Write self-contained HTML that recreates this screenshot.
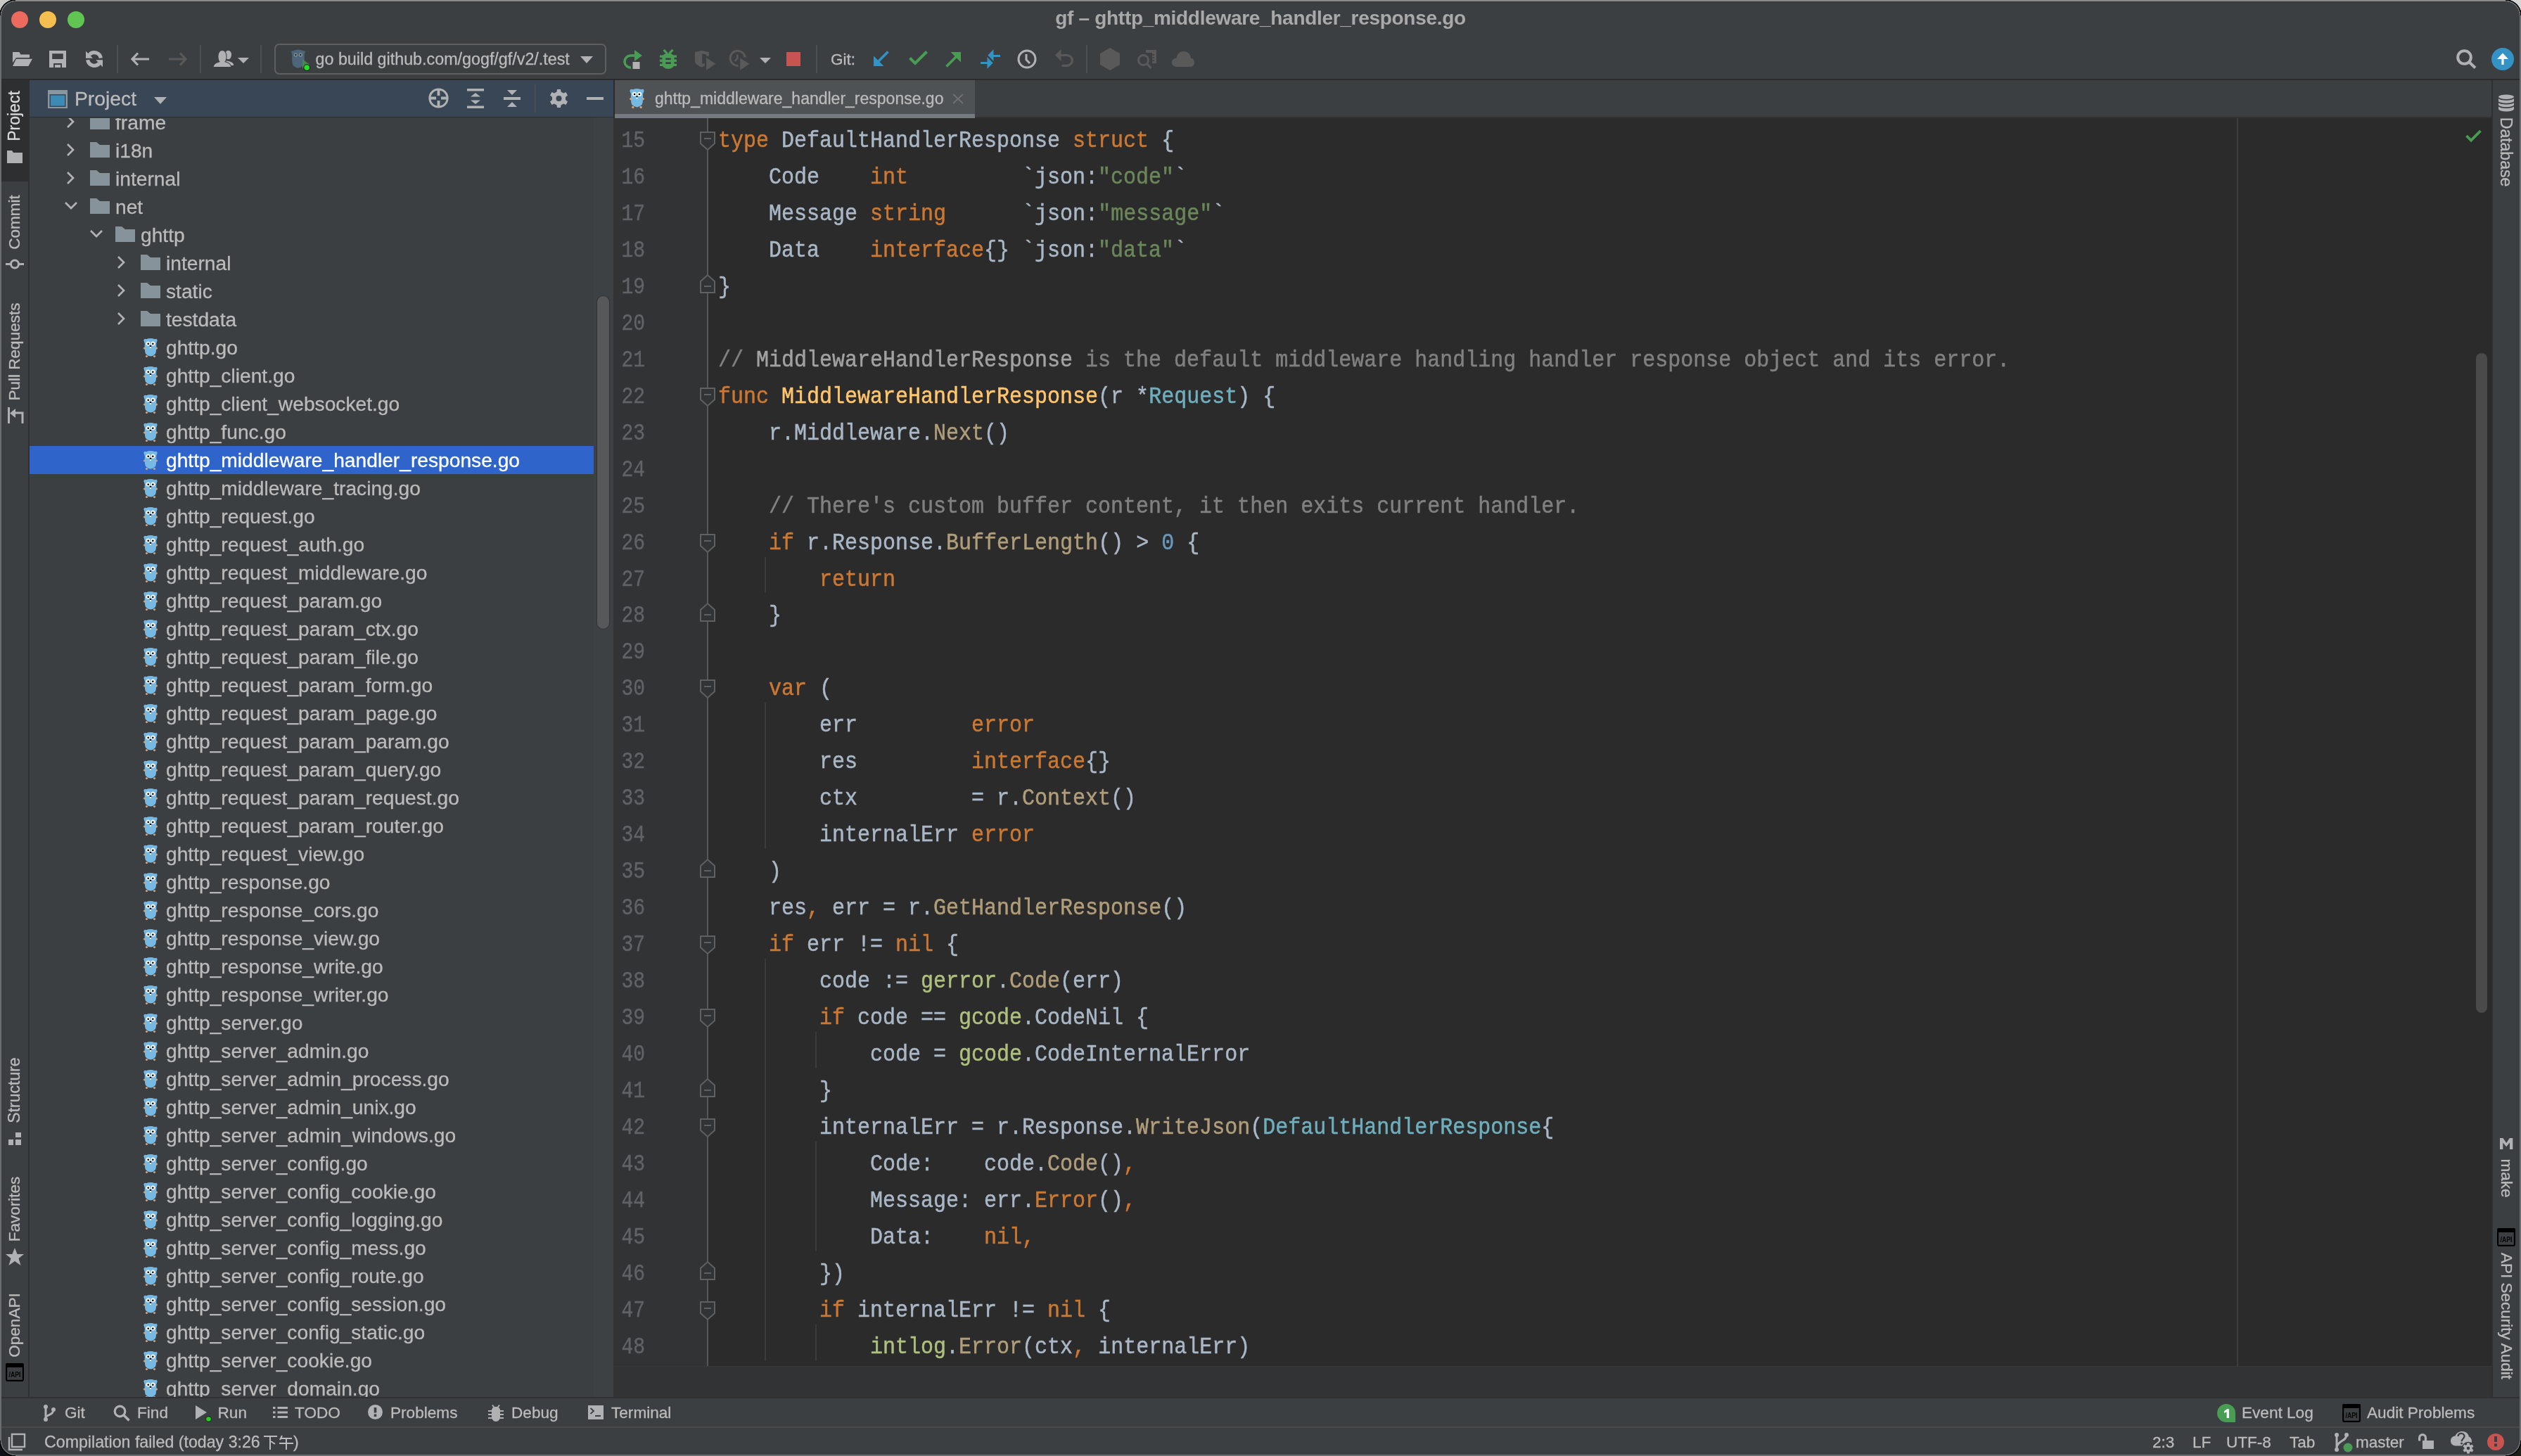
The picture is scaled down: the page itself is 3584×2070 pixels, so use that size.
<!DOCTYPE html>
<html><head><meta charset="utf-8"><title>gf – ghttp_middleware_handler_response.go</title>
<style>
html,body{margin:0;padding:0;width:3584px;height:2070px;overflow:hidden;background:#3C3F41;font-family:'Liberation Sans', sans-serif;}
#win{position:absolute;left:0;top:0;width:3584px;height:2070px;overflow:hidden;will-change:transform;}
.code div{position:absolute;white-space:pre;-webkit-text-stroke:0.45px currentColor;}
.k{color:#CC7832} .s{color:#6A8759} .c{color:#808080} .f{color:#FFC66D} .m{color:#B09D79} .n{color:#6897BB} .y{color:#6FAFBD} .p{color:#AFBF7E} .cr{color:#A2A2A2}
</style></head><body><div id="win">
<div style="position:absolute;left:0px;top:0px;width:3584px;height:2070px;background:#3C3F41;"></div><div style="position:absolute;left:0px;top:112px;width:3584px;height:2px;background:#2B2B2B;"></div><div style="position:absolute;left:0px;top:114px;width:40px;height:1873px;background:#3C3F41;"></div><div style="position:absolute;left:40px;top:114px;width:2px;height:1873px;background:#2F3031;"></div><div style="position:absolute;left:2px;top:114px;width:38px;height:144px;background:#2D2F30;"></div><div style="position:absolute;left:42px;top:114px;width:830px;height:52px;background:#394655;"></div><div style="position:absolute;left:42px;top:166px;width:830px;height:2px;background:#2D2E2E;"></div><div style="position:absolute;left:42px;top:167px;width:830px;height:1820px;background:#3C3F41;"></div><div style="position:absolute;left:844px;top:167px;width:28px;height:1820px;background:#3E4144;"></div><div style="position:absolute;left:872px;top:114px;width:2px;height:54px;background:#2B2B2B;"></div><div style="position:absolute;left:874px;top:114px;width:2668px;height:52px;background:#3C3F41;"></div><div style="position:absolute;left:874px;top:166px;width:2668px;height:2px;background:#323232;"></div><div style="position:absolute;left:872px;top:168px;width:135px;height:1774px;background:#313335;"></div><div style="position:absolute;left:1007px;top:168px;width:2535px;height:1774px;background:#2B2B2B;"></div><div style="position:absolute;left:872px;top:1942px;width:2670px;height:45px;background:#313335;"></div><div style="position:absolute;left:872px;top:1942px;width:2670px;height:1px;background:#38393A;"></div><div style="position:absolute;left:3542px;top:114px;width:2px;height:1873px;background:#2F3031;"></div><div style="position:absolute;left:3544px;top:114px;width:38px;height:1873px;background:#3C3F41;"></div><div style="position:absolute;left:0px;top:1986px;width:3584px;height:2px;background:#303132;"></div><div style="position:absolute;left:0px;top:1988px;width:3584px;height:41px;background:#3C3F41;"></div><div style="position:absolute;left:0px;top:2028px;width:3584px;height:2px;background:#4A4A49;"></div><div style="position:absolute;left:0px;top:2030px;width:3584px;height:40px;background:#3C3F41;"></div><div style="position:absolute;left:1087px;top:792px;width:2px;height:51px;background:#393B3C;"></div><div style="position:absolute;left:1087px;top:999px;width:2px;height:208px;background:#393B3C;"></div><div style="position:absolute;left:1087px;top:1363px;width:2px;height:572px;background:#393B3C;"></div><div style="position:absolute;left:1159px;top:1467px;width:2px;height:52px;background:#393B3C;"></div><div style="position:absolute;left:1159px;top:1623px;width:2px;height:156px;background:#393B3C;"></div><div style="position:absolute;left:1159px;top:1883px;width:2px;height:52px;background:#393B3C;"></div><div style="position:absolute;left:3180px;top:168px;width:2px;height:1774px;background:#3F3F3F;"></div><div style="position:absolute;left:1005px;top:168px;width:2px;height:1774px;background:#555759;"></div><svg style="position:absolute;left:994px;top:187px;overflow:visible" width="24" height="28" viewBox="0 0 24 28"><path d="M2 1 H22 V17 L12 26 L2 17 Z" fill="#313335" stroke="#5E6062" stroke-width="2"/><path d="M7 10 H17" stroke="#5E6062" stroke-width="2"/></svg><svg style="position:absolute;left:994px;top:551px;overflow:visible" width="24" height="28" viewBox="0 0 24 28"><path d="M2 1 H22 V17 L12 26 L2 17 Z" fill="#313335" stroke="#5E6062" stroke-width="2"/><path d="M7 10 H17" stroke="#5E6062" stroke-width="2"/></svg><svg style="position:absolute;left:994px;top:759px;overflow:visible" width="24" height="28" viewBox="0 0 24 28"><path d="M2 1 H22 V17 L12 26 L2 17 Z" fill="#313335" stroke="#5E6062" stroke-width="2"/><path d="M7 10 H17" stroke="#5E6062" stroke-width="2"/></svg><svg style="position:absolute;left:994px;top:966px;overflow:visible" width="24" height="28" viewBox="0 0 24 28"><path d="M2 1 H22 V17 L12 26 L2 17 Z" fill="#313335" stroke="#5E6062" stroke-width="2"/><path d="M7 10 H17" stroke="#5E6062" stroke-width="2"/></svg><svg style="position:absolute;left:994px;top:1330px;overflow:visible" width="24" height="28" viewBox="0 0 24 28"><path d="M2 1 H22 V17 L12 26 L2 17 Z" fill="#313335" stroke="#5E6062" stroke-width="2"/><path d="M7 10 H17" stroke="#5E6062" stroke-width="2"/></svg><svg style="position:absolute;left:994px;top:1434px;overflow:visible" width="24" height="28" viewBox="0 0 24 28"><path d="M2 1 H22 V17 L12 26 L2 17 Z" fill="#313335" stroke="#5E6062" stroke-width="2"/><path d="M7 10 H17" stroke="#5E6062" stroke-width="2"/></svg><svg style="position:absolute;left:994px;top:1590px;overflow:visible" width="24" height="28" viewBox="0 0 24 28"><path d="M2 1 H22 V17 L12 26 L2 17 Z" fill="#313335" stroke="#5E6062" stroke-width="2"/><path d="M7 10 H17" stroke="#5E6062" stroke-width="2"/></svg><svg style="position:absolute;left:994px;top:1850px;overflow:visible" width="24" height="28" viewBox="0 0 24 28"><path d="M2 1 H22 V17 L12 26 L2 17 Z" fill="#313335" stroke="#5E6062" stroke-width="2"/><path d="M7 10 H17" stroke="#5E6062" stroke-width="2"/></svg><svg style="position:absolute;left:994px;top:389px;overflow:visible" width="24" height="28" viewBox="0 0 24 28"><path d="M2 27 H22 V11 L12 2 L2 11 Z" fill="#313335" stroke="#5E6062" stroke-width="2"/><path d="M7 18 H17" stroke="#5E6062" stroke-width="2"/></svg><svg style="position:absolute;left:994px;top:856px;overflow:visible" width="24" height="28" viewBox="0 0 24 28"><path d="M2 27 H22 V11 L12 2 L2 11 Z" fill="#313335" stroke="#5E6062" stroke-width="2"/><path d="M7 18 H17" stroke="#5E6062" stroke-width="2"/></svg><svg style="position:absolute;left:994px;top:1220px;overflow:visible" width="24" height="28" viewBox="0 0 24 28"><path d="M2 27 H22 V11 L12 2 L2 11 Z" fill="#313335" stroke="#5E6062" stroke-width="2"/><path d="M7 18 H17" stroke="#5E6062" stroke-width="2"/></svg><svg style="position:absolute;left:994px;top:1532px;overflow:visible" width="24" height="28" viewBox="0 0 24 28"><path d="M2 27 H22 V11 L12 2 L2 11 Z" fill="#313335" stroke="#5E6062" stroke-width="2"/><path d="M7 18 H17" stroke="#5E6062" stroke-width="2"/></svg><svg style="position:absolute;left:994px;top:1792px;overflow:visible" width="24" height="28" viewBox="0 0 24 28"><path d="M2 27 H22 V11 L12 2 L2 11 Z" fill="#313335" stroke="#5E6062" stroke-width="2"/><path d="M7 18 H17" stroke="#5E6062" stroke-width="2"/></svg><div style="position:absolute;left:850px;width:67px;text-align:right;top:176px;font-family:'Liberation Mono', monospace;font-size:28px;line-height:52px;color:#606366;white-space:pre;-webkit-text-stroke:0.35px #606366;transform:scaleY(1.17);transform-origin:0 33.5px">15</div><div style="position:absolute;left:850px;width:67px;text-align:right;top:228px;font-family:'Liberation Mono', monospace;font-size:28px;line-height:52px;color:#606366;white-space:pre;-webkit-text-stroke:0.35px #606366;transform:scaleY(1.17);transform-origin:0 33.5px">16</div><div style="position:absolute;left:850px;width:67px;text-align:right;top:280px;font-family:'Liberation Mono', monospace;font-size:28px;line-height:52px;color:#606366;white-space:pre;-webkit-text-stroke:0.35px #606366;transform:scaleY(1.17);transform-origin:0 33.5px">17</div><div style="position:absolute;left:850px;width:67px;text-align:right;top:332px;font-family:'Liberation Mono', monospace;font-size:28px;line-height:52px;color:#606366;white-space:pre;-webkit-text-stroke:0.35px #606366;transform:scaleY(1.17);transform-origin:0 33.5px">18</div><div style="position:absolute;left:850px;width:67px;text-align:right;top:384px;font-family:'Liberation Mono', monospace;font-size:28px;line-height:52px;color:#606366;white-space:pre;-webkit-text-stroke:0.35px #606366;transform:scaleY(1.17);transform-origin:0 33.5px">19</div><div style="position:absolute;left:850px;width:67px;text-align:right;top:436px;font-family:'Liberation Mono', monospace;font-size:28px;line-height:52px;color:#606366;white-space:pre;-webkit-text-stroke:0.35px #606366;transform:scaleY(1.17);transform-origin:0 33.5px">20</div><div style="position:absolute;left:850px;width:67px;text-align:right;top:488px;font-family:'Liberation Mono', monospace;font-size:28px;line-height:52px;color:#606366;white-space:pre;-webkit-text-stroke:0.35px #606366;transform:scaleY(1.17);transform-origin:0 33.5px">21</div><div style="position:absolute;left:850px;width:67px;text-align:right;top:540px;font-family:'Liberation Mono', monospace;font-size:28px;line-height:52px;color:#606366;white-space:pre;-webkit-text-stroke:0.35px #606366;transform:scaleY(1.17);transform-origin:0 33.5px">22</div><div style="position:absolute;left:850px;width:67px;text-align:right;top:592px;font-family:'Liberation Mono', monospace;font-size:28px;line-height:52px;color:#606366;white-space:pre;-webkit-text-stroke:0.35px #606366;transform:scaleY(1.17);transform-origin:0 33.5px">23</div><div style="position:absolute;left:850px;width:67px;text-align:right;top:644px;font-family:'Liberation Mono', monospace;font-size:28px;line-height:52px;color:#606366;white-space:pre;-webkit-text-stroke:0.35px #606366;transform:scaleY(1.17);transform-origin:0 33.5px">24</div><div style="position:absolute;left:850px;width:67px;text-align:right;top:696px;font-family:'Liberation Mono', monospace;font-size:28px;line-height:52px;color:#606366;white-space:pre;-webkit-text-stroke:0.35px #606366;transform:scaleY(1.17);transform-origin:0 33.5px">25</div><div style="position:absolute;left:850px;width:67px;text-align:right;top:748px;font-family:'Liberation Mono', monospace;font-size:28px;line-height:52px;color:#606366;white-space:pre;-webkit-text-stroke:0.35px #606366;transform:scaleY(1.17);transform-origin:0 33.5px">26</div><div style="position:absolute;left:850px;width:67px;text-align:right;top:800px;font-family:'Liberation Mono', monospace;font-size:28px;line-height:52px;color:#606366;white-space:pre;-webkit-text-stroke:0.35px #606366;transform:scaleY(1.17);transform-origin:0 33.5px">27</div><div style="position:absolute;left:850px;width:67px;text-align:right;top:851px;font-family:'Liberation Mono', monospace;font-size:28px;line-height:52px;color:#606366;white-space:pre;-webkit-text-stroke:0.35px #606366;transform:scaleY(1.17);transform-origin:0 33.5px">28</div><div style="position:absolute;left:850px;width:67px;text-align:right;top:903px;font-family:'Liberation Mono', monospace;font-size:28px;line-height:52px;color:#606366;white-space:pre;-webkit-text-stroke:0.35px #606366;transform:scaleY(1.17);transform-origin:0 33.5px">29</div><div style="position:absolute;left:850px;width:67px;text-align:right;top:955px;font-family:'Liberation Mono', monospace;font-size:28px;line-height:52px;color:#606366;white-space:pre;-webkit-text-stroke:0.35px #606366;transform:scaleY(1.17);transform-origin:0 33.5px">30</div><div style="position:absolute;left:850px;width:67px;text-align:right;top:1007px;font-family:'Liberation Mono', monospace;font-size:28px;line-height:52px;color:#606366;white-space:pre;-webkit-text-stroke:0.35px #606366;transform:scaleY(1.17);transform-origin:0 33.5px">31</div><div style="position:absolute;left:850px;width:67px;text-align:right;top:1059px;font-family:'Liberation Mono', monospace;font-size:28px;line-height:52px;color:#606366;white-space:pre;-webkit-text-stroke:0.35px #606366;transform:scaleY(1.17);transform-origin:0 33.5px">32</div><div style="position:absolute;left:850px;width:67px;text-align:right;top:1111px;font-family:'Liberation Mono', monospace;font-size:28px;line-height:52px;color:#606366;white-space:pre;-webkit-text-stroke:0.35px #606366;transform:scaleY(1.17);transform-origin:0 33.5px">33</div><div style="position:absolute;left:850px;width:67px;text-align:right;top:1163px;font-family:'Liberation Mono', monospace;font-size:28px;line-height:52px;color:#606366;white-space:pre;-webkit-text-stroke:0.35px #606366;transform:scaleY(1.17);transform-origin:0 33.5px">34</div><div style="position:absolute;left:850px;width:67px;text-align:right;top:1215px;font-family:'Liberation Mono', monospace;font-size:28px;line-height:52px;color:#606366;white-space:pre;-webkit-text-stroke:0.35px #606366;transform:scaleY(1.17);transform-origin:0 33.5px">35</div><div style="position:absolute;left:850px;width:67px;text-align:right;top:1267px;font-family:'Liberation Mono', monospace;font-size:28px;line-height:52px;color:#606366;white-space:pre;-webkit-text-stroke:0.35px #606366;transform:scaleY(1.17);transform-origin:0 33.5px">36</div><div style="position:absolute;left:850px;width:67px;text-align:right;top:1319px;font-family:'Liberation Mono', monospace;font-size:28px;line-height:52px;color:#606366;white-space:pre;-webkit-text-stroke:0.35px #606366;transform:scaleY(1.17);transform-origin:0 33.5px">37</div><div style="position:absolute;left:850px;width:67px;text-align:right;top:1371px;font-family:'Liberation Mono', monospace;font-size:28px;line-height:52px;color:#606366;white-space:pre;-webkit-text-stroke:0.35px #606366;transform:scaleY(1.17);transform-origin:0 33.5px">38</div><div style="position:absolute;left:850px;width:67px;text-align:right;top:1423px;font-family:'Liberation Mono', monospace;font-size:28px;line-height:52px;color:#606366;white-space:pre;-webkit-text-stroke:0.35px #606366;transform:scaleY(1.17);transform-origin:0 33.5px">39</div><div style="position:absolute;left:850px;width:67px;text-align:right;top:1475px;font-family:'Liberation Mono', monospace;font-size:28px;line-height:52px;color:#606366;white-space:pre;-webkit-text-stroke:0.35px #606366;transform:scaleY(1.17);transform-origin:0 33.5px">40</div><div style="position:absolute;left:850px;width:67px;text-align:right;top:1527px;font-family:'Liberation Mono', monospace;font-size:28px;line-height:52px;color:#606366;white-space:pre;-webkit-text-stroke:0.35px #606366;transform:scaleY(1.17);transform-origin:0 33.5px">41</div><div style="position:absolute;left:850px;width:67px;text-align:right;top:1579px;font-family:'Liberation Mono', monospace;font-size:28px;line-height:52px;color:#606366;white-space:pre;-webkit-text-stroke:0.35px #606366;transform:scaleY(1.17);transform-origin:0 33.5px">42</div><div style="position:absolute;left:850px;width:67px;text-align:right;top:1631px;font-family:'Liberation Mono', monospace;font-size:28px;line-height:52px;color:#606366;white-space:pre;-webkit-text-stroke:0.35px #606366;transform:scaleY(1.17);transform-origin:0 33.5px">43</div><div style="position:absolute;left:850px;width:67px;text-align:right;top:1683px;font-family:'Liberation Mono', monospace;font-size:28px;line-height:52px;color:#606366;white-space:pre;-webkit-text-stroke:0.35px #606366;transform:scaleY(1.17);transform-origin:0 33.5px">44</div><div style="position:absolute;left:850px;width:67px;text-align:right;top:1735px;font-family:'Liberation Mono', monospace;font-size:28px;line-height:52px;color:#606366;white-space:pre;-webkit-text-stroke:0.35px #606366;transform:scaleY(1.17);transform-origin:0 33.5px">45</div><div style="position:absolute;left:850px;width:67px;text-align:right;top:1787px;font-family:'Liberation Mono', monospace;font-size:28px;line-height:52px;color:#606366;white-space:pre;-webkit-text-stroke:0.35px #606366;transform:scaleY(1.17);transform-origin:0 33.5px">46</div><div style="position:absolute;left:850px;width:67px;text-align:right;top:1839px;font-family:'Liberation Mono', monospace;font-size:28px;line-height:52px;color:#606366;white-space:pre;-webkit-text-stroke:0.35px #606366;transform:scaleY(1.17);transform-origin:0 33.5px">47</div><div style="position:absolute;left:850px;width:67px;text-align:right;top:1891px;font-family:'Liberation Mono', monospace;font-size:28px;line-height:52px;color:#606366;white-space:pre;-webkit-text-stroke:0.35px #606366;transform:scaleY(1.17);transform-origin:0 33.5px">48</div><div class="code" style="position:absolute;left:0;top:0;font-family:'Liberation Mono', monospace;font-size:30px;line-height:52px;color:#A9B7C6"><div style="left:1021px;top:175px;transform:scaleY(1.09);transform-origin:0 34px"><span class="k">type</span> DefaultHandlerResponse <span class="k">struct</span> {</div><div style="left:1021px;top:227px;transform:scaleY(1.09);transform-origin:0 34px">    Code    <span class="k">int</span>         `json:<span class="s">&quot;code&quot;</span>`</div><div style="left:1021px;top:279px;transform:scaleY(1.09);transform-origin:0 34px">    Message <span class="k">string</span>      `json:<span class="s">&quot;message&quot;</span>`</div><div style="left:1021px;top:331px;transform:scaleY(1.09);transform-origin:0 34px">    Data    <span class="k">interface</span>{} `json:<span class="s">&quot;data&quot;</span>`</div><div style="left:1021px;top:383px;transform:scaleY(1.09);transform-origin:0 34px">}</div><div style="left:1021px;top:435px;transform:scaleY(1.09);transform-origin:0 34px"></div><div style="left:1021px;top:487px;transform:scaleY(1.09);transform-origin:0 34px"><span class="c">// </span><span class="cr">MiddlewareHandlerResponse</span><span class="c"> is the default middleware handling handler response object and its error.</span></div><div style="left:1021px;top:539px;transform:scaleY(1.09);transform-origin:0 34px"><span class="k">func</span> <span class="f">MiddlewareHandlerResponse</span>(r *<span class="y">Request</span>) {</div><div style="left:1021px;top:591px;transform:scaleY(1.09);transform-origin:0 34px">    r.Middleware.<span class="m">Next</span>()</div><div style="left:1021px;top:643px;transform:scaleY(1.09);transform-origin:0 34px"></div><div style="left:1021px;top:695px;transform:scaleY(1.09);transform-origin:0 34px">    <span class="c">// There&#x27;s custom buffer content, it then exits current handler.</span></div><div style="left:1021px;top:747px;transform:scaleY(1.09);transform-origin:0 34px">    <span class="k">if</span> r.Response.<span class="m">BufferLength</span>() &gt; <span class="n">0</span> {</div><div style="left:1021px;top:799px;transform:scaleY(1.09);transform-origin:0 34px">        <span class="k">return</span></div><div style="left:1021px;top:850px;transform:scaleY(1.09);transform-origin:0 34px">    }</div><div style="left:1021px;top:902px;transform:scaleY(1.09);transform-origin:0 34px"></div><div style="left:1021px;top:954px;transform:scaleY(1.09);transform-origin:0 34px">    <span class="k">var</span> (</div><div style="left:1021px;top:1006px;transform:scaleY(1.09);transform-origin:0 34px">        err         <span class="k">error</span></div><div style="left:1021px;top:1058px;transform:scaleY(1.09);transform-origin:0 34px">        res         <span class="k">interface</span>{}</div><div style="left:1021px;top:1110px;transform:scaleY(1.09);transform-origin:0 34px">        ctx         = r.<span class="m">Context</span>()</div><div style="left:1021px;top:1162px;transform:scaleY(1.09);transform-origin:0 34px">        internalErr <span class="k">error</span></div><div style="left:1021px;top:1214px;transform:scaleY(1.09);transform-origin:0 34px">    )</div><div style="left:1021px;top:1266px;transform:scaleY(1.09);transform-origin:0 34px">    res<span class="k">,</span> err = r.<span class="m">GetHandlerResponse</span>()</div><div style="left:1021px;top:1318px;transform:scaleY(1.09);transform-origin:0 34px">    <span class="k">if</span> err != <span class="k">nil</span> {</div><div style="left:1021px;top:1370px;transform:scaleY(1.09);transform-origin:0 34px">        code := <span class="p">gerror</span>.<span class="m">Code</span>(err)</div><div style="left:1021px;top:1422px;transform:scaleY(1.09);transform-origin:0 34px">        <span class="k">if</span> code == <span class="p">gcode</span>.CodeNil {</div><div style="left:1021px;top:1474px;transform:scaleY(1.09);transform-origin:0 34px">            code = <span class="p">gcode</span>.CodeInternalError</div><div style="left:1021px;top:1526px;transform:scaleY(1.09);transform-origin:0 34px">        }</div><div style="left:1021px;top:1578px;transform:scaleY(1.09);transform-origin:0 34px">        internalErr = r.Response.<span class="m">WriteJson</span>(<span class="y">DefaultHandlerResponse</span>{</div><div style="left:1021px;top:1630px;transform:scaleY(1.09);transform-origin:0 34px">            Code:    code.<span class="m">Code</span>()<span class="k">,</span></div><div style="left:1021px;top:1682px;transform:scaleY(1.09);transform-origin:0 34px">            Message: err.<span class="k">Error</span>()<span class="k">,</span></div><div style="left:1021px;top:1734px;transform:scaleY(1.09);transform-origin:0 34px">            Data:    <span class="k">nil</span><span class="k">,</span></div><div style="left:1021px;top:1786px;transform:scaleY(1.09);transform-origin:0 34px">        })</div><div style="left:1021px;top:1838px;transform:scaleY(1.09);transform-origin:0 34px">        <span class="k">if</span> internalErr != <span class="k">nil</span> {</div><div style="left:1021px;top:1890px;transform:scaleY(1.09);transform-origin:0 34px">            <span class="p">intlog</span>.<span class="m">Error</span>(ctx<span class="k">,</span> internalErr)</div></div><div style="position:absolute;left:0;top:0;width:3584px;height:2070px;clip-path:inset(168px 2740px 84px 42px)"><svg style="position:absolute;left:128px;top:162px;overflow:visible" width="28" height="22" viewBox="0 0 28 22"><path d="M0 0 H9 L14 4 H28 V22 H0 Z" fill="#87939A"/></svg><svg style="position:absolute;left:95px;top:164px;overflow:visible" width="10" height="18" viewBox="0 0 10 18"><path d="M1 1 L9 9 L1 17" fill="none" stroke="#AFB1B3" stroke-width="2.7"/></svg><div style="position:absolute;left:164px;top:157.23px;font-size:28.2px;line-height:34px;color:#BBBBBB;font-weight:normal;white-space:nowrap;-webkit-text-stroke:0.3px #BBBBBB;">frame</div><svg style="position:absolute;left:128px;top:202px;overflow:visible" width="28" height="22" viewBox="0 0 28 22"><path d="M0 0 H9 L14 4 H28 V22 H0 Z" fill="#87939A"/></svg><svg style="position:absolute;left:95px;top:204px;overflow:visible" width="10" height="18" viewBox="0 0 10 18"><path d="M1 1 L9 9 L1 17" fill="none" stroke="#AFB1B3" stroke-width="2.7"/></svg><div style="position:absolute;left:164px;top:197.23px;font-size:28.2px;line-height:34px;color:#BBBBBB;font-weight:normal;white-space:nowrap;-webkit-text-stroke:0.3px #BBBBBB;">i18n</div><svg style="position:absolute;left:128px;top:242px;overflow:visible" width="28" height="22" viewBox="0 0 28 22"><path d="M0 0 H9 L14 4 H28 V22 H0 Z" fill="#87939A"/></svg><svg style="position:absolute;left:95px;top:244px;overflow:visible" width="10" height="18" viewBox="0 0 10 18"><path d="M1 1 L9 9 L1 17" fill="none" stroke="#AFB1B3" stroke-width="2.7"/></svg><div style="position:absolute;left:164px;top:237.23px;font-size:28.2px;line-height:34px;color:#BBBBBB;font-weight:normal;white-space:nowrap;-webkit-text-stroke:0.3px #BBBBBB;">internal</div><svg style="position:absolute;left:128px;top:282px;overflow:visible" width="28" height="22" viewBox="0 0 28 22"><path d="M0 0 H9 L14 4 H28 V22 H0 Z" fill="#87939A"/></svg><svg style="position:absolute;left:92px;top:287px;overflow:visible" width="18" height="10" viewBox="0 0 18 10"><path d="M1 1 L9 9 L17 1" fill="none" stroke="#AFB1B3" stroke-width="2.7"/></svg><div style="position:absolute;left:164px;top:277.23px;font-size:28.2px;line-height:34px;color:#BBBBBB;font-weight:normal;white-space:nowrap;-webkit-text-stroke:0.3px #BBBBBB;">net</div><svg style="position:absolute;left:164px;top:322px;overflow:visible" width="28" height="22" viewBox="0 0 28 22"><path d="M0 0 H9 L14 4 H28 V22 H0 Z" fill="#87939A"/></svg><svg style="position:absolute;left:128px;top:327px;overflow:visible" width="18" height="10" viewBox="0 0 18 10"><path d="M1 1 L9 9 L17 1" fill="none" stroke="#AFB1B3" stroke-width="2.7"/></svg><div style="position:absolute;left:200px;top:317.23px;font-size:28.2px;line-height:34px;color:#BBBBBB;font-weight:normal;white-space:nowrap;-webkit-text-stroke:0.3px #BBBBBB;">ghttp</div><svg style="position:absolute;left:200px;top:362px;overflow:visible" width="28" height="22" viewBox="0 0 28 22"><path d="M0 0 H9 L14 4 H28 V22 H0 Z" fill="#87939A"/></svg><svg style="position:absolute;left:167px;top:364px;overflow:visible" width="10" height="18" viewBox="0 0 10 18"><path d="M1 1 L9 9 L1 17" fill="none" stroke="#AFB1B3" stroke-width="2.7"/></svg><div style="position:absolute;left:236px;top:357.23px;font-size:28.2px;line-height:34px;color:#BBBBBB;font-weight:normal;white-space:nowrap;-webkit-text-stroke:0.3px #BBBBBB;">internal</div><svg style="position:absolute;left:200px;top:402px;overflow:visible" width="28" height="22" viewBox="0 0 28 22"><path d="M0 0 H9 L14 4 H28 V22 H0 Z" fill="#87939A"/></svg><svg style="position:absolute;left:167px;top:404px;overflow:visible" width="10" height="18" viewBox="0 0 10 18"><path d="M1 1 L9 9 L1 17" fill="none" stroke="#AFB1B3" stroke-width="2.7"/></svg><div style="position:absolute;left:236px;top:397.23px;font-size:28.2px;line-height:34px;color:#BBBBBB;font-weight:normal;white-space:nowrap;-webkit-text-stroke:0.3px #BBBBBB;">static</div><svg style="position:absolute;left:200px;top:442px;overflow:visible" width="28" height="22" viewBox="0 0 28 22"><path d="M0 0 H9 L14 4 H28 V22 H0 Z" fill="#87939A"/></svg><svg style="position:absolute;left:167px;top:444px;overflow:visible" width="10" height="18" viewBox="0 0 10 18"><path d="M1 1 L9 9 L1 17" fill="none" stroke="#AFB1B3" stroke-width="2.7"/></svg><div style="position:absolute;left:236px;top:437.23px;font-size:28.2px;line-height:34px;color:#BBBBBB;font-weight:normal;white-space:nowrap;-webkit-text-stroke:0.3px #BBBBBB;">testdata</div><svg style="position:absolute;left:204px;top:480px;overflow:visible" width="20" height="28" viewBox="0 0 20 28"><ellipse cx="10" cy="6" rx="9" ry="5" fill="#76B9E3"/><circle cx="2.5" cy="4" r="2.2" fill="#76B9E3"/><circle cx="17.5" cy="4" r="2.2" fill="#76B9E3"/><path d="M2 6 Q1 18 3 23 Q10 30 17 23 Q19 18 18 6 Z" fill="#76B9E3"/><circle cx="1.5" cy="15" r="1.6" fill="#D3A27F"/><circle cx="18.5" cy="15" r="1.6" fill="#D3A27F"/><circle cx="4.5" cy="26.5" r="1.6" fill="#D3A27F"/><circle cx="15.5" cy="26.5" r="1.6" fill="#D3A27F"/><circle cx="6.5" cy="8.5" r="3" fill="#fff"/><circle cx="13.5" cy="8.5" r="3" fill="#fff"/><circle cx="6.7" cy="8.7" r="1.3" fill="#000"/><circle cx="13.3" cy="8.7" r="1.3" fill="#000"/><ellipse cx="10" cy="12" rx="1.4" ry="1" fill="#000"/><rect x="9" y="13" width="2" height="2" fill="#fff"/></svg><div style="position:absolute;left:236px;top:477.23px;font-size:28.2px;line-height:34px;color:#BBBBBB;font-weight:normal;white-space:nowrap;-webkit-text-stroke:0.3px #BBBBBB;">ghttp.go</div><svg style="position:absolute;left:204px;top:520px;overflow:visible" width="20" height="28" viewBox="0 0 20 28"><ellipse cx="10" cy="6" rx="9" ry="5" fill="#76B9E3"/><circle cx="2.5" cy="4" r="2.2" fill="#76B9E3"/><circle cx="17.5" cy="4" r="2.2" fill="#76B9E3"/><path d="M2 6 Q1 18 3 23 Q10 30 17 23 Q19 18 18 6 Z" fill="#76B9E3"/><circle cx="1.5" cy="15" r="1.6" fill="#D3A27F"/><circle cx="18.5" cy="15" r="1.6" fill="#D3A27F"/><circle cx="4.5" cy="26.5" r="1.6" fill="#D3A27F"/><circle cx="15.5" cy="26.5" r="1.6" fill="#D3A27F"/><circle cx="6.5" cy="8.5" r="3" fill="#fff"/><circle cx="13.5" cy="8.5" r="3" fill="#fff"/><circle cx="6.7" cy="8.7" r="1.3" fill="#000"/><circle cx="13.3" cy="8.7" r="1.3" fill="#000"/><ellipse cx="10" cy="12" rx="1.4" ry="1" fill="#000"/><rect x="9" y="13" width="2" height="2" fill="#fff"/></svg><div style="position:absolute;left:236px;top:517.23px;font-size:28.2px;line-height:34px;color:#BBBBBB;font-weight:normal;white-space:nowrap;-webkit-text-stroke:0.3px #BBBBBB;">ghttp_client.go</div><svg style="position:absolute;left:204px;top:560px;overflow:visible" width="20" height="28" viewBox="0 0 20 28"><ellipse cx="10" cy="6" rx="9" ry="5" fill="#76B9E3"/><circle cx="2.5" cy="4" r="2.2" fill="#76B9E3"/><circle cx="17.5" cy="4" r="2.2" fill="#76B9E3"/><path d="M2 6 Q1 18 3 23 Q10 30 17 23 Q19 18 18 6 Z" fill="#76B9E3"/><circle cx="1.5" cy="15" r="1.6" fill="#D3A27F"/><circle cx="18.5" cy="15" r="1.6" fill="#D3A27F"/><circle cx="4.5" cy="26.5" r="1.6" fill="#D3A27F"/><circle cx="15.5" cy="26.5" r="1.6" fill="#D3A27F"/><circle cx="6.5" cy="8.5" r="3" fill="#fff"/><circle cx="13.5" cy="8.5" r="3" fill="#fff"/><circle cx="6.7" cy="8.7" r="1.3" fill="#000"/><circle cx="13.3" cy="8.7" r="1.3" fill="#000"/><ellipse cx="10" cy="12" rx="1.4" ry="1" fill="#000"/><rect x="9" y="13" width="2" height="2" fill="#fff"/></svg><div style="position:absolute;left:236px;top:557.23px;font-size:28.2px;line-height:34px;color:#BBBBBB;font-weight:normal;white-space:nowrap;-webkit-text-stroke:0.3px #BBBBBB;">ghttp_client_websocket.go</div><svg style="position:absolute;left:204px;top:600px;overflow:visible" width="20" height="28" viewBox="0 0 20 28"><ellipse cx="10" cy="6" rx="9" ry="5" fill="#76B9E3"/><circle cx="2.5" cy="4" r="2.2" fill="#76B9E3"/><circle cx="17.5" cy="4" r="2.2" fill="#76B9E3"/><path d="M2 6 Q1 18 3 23 Q10 30 17 23 Q19 18 18 6 Z" fill="#76B9E3"/><circle cx="1.5" cy="15" r="1.6" fill="#D3A27F"/><circle cx="18.5" cy="15" r="1.6" fill="#D3A27F"/><circle cx="4.5" cy="26.5" r="1.6" fill="#D3A27F"/><circle cx="15.5" cy="26.5" r="1.6" fill="#D3A27F"/><circle cx="6.5" cy="8.5" r="3" fill="#fff"/><circle cx="13.5" cy="8.5" r="3" fill="#fff"/><circle cx="6.7" cy="8.7" r="1.3" fill="#000"/><circle cx="13.3" cy="8.7" r="1.3" fill="#000"/><ellipse cx="10" cy="12" rx="1.4" ry="1" fill="#000"/><rect x="9" y="13" width="2" height="2" fill="#fff"/></svg><div style="position:absolute;left:236px;top:597.23px;font-size:28.2px;line-height:34px;color:#BBBBBB;font-weight:normal;white-space:nowrap;-webkit-text-stroke:0.3px #BBBBBB;">ghttp_func.go</div><div style="position:absolute;left:42px;top:634px;width:802px;height:40px;background:#2F65CA;"></div><svg style="position:absolute;left:204px;top:640px;overflow:visible" width="20" height="28" viewBox="0 0 20 28"><ellipse cx="10" cy="6" rx="9" ry="5" fill="#76B9E3"/><circle cx="2.5" cy="4" r="2.2" fill="#76B9E3"/><circle cx="17.5" cy="4" r="2.2" fill="#76B9E3"/><path d="M2 6 Q1 18 3 23 Q10 30 17 23 Q19 18 18 6 Z" fill="#76B9E3"/><circle cx="1.5" cy="15" r="1.6" fill="#D3A27F"/><circle cx="18.5" cy="15" r="1.6" fill="#D3A27F"/><circle cx="4.5" cy="26.5" r="1.6" fill="#D3A27F"/><circle cx="15.5" cy="26.5" r="1.6" fill="#D3A27F"/><circle cx="6.5" cy="8.5" r="3" fill="#fff"/><circle cx="13.5" cy="8.5" r="3" fill="#fff"/><circle cx="6.7" cy="8.7" r="1.3" fill="#000"/><circle cx="13.3" cy="8.7" r="1.3" fill="#000"/><ellipse cx="10" cy="12" rx="1.4" ry="1" fill="#000"/><rect x="9" y="13" width="2" height="2" fill="#fff"/></svg><div style="position:absolute;left:236px;top:637.23px;font-size:28.2px;line-height:34px;color:#FFFFFF;font-weight:normal;white-space:nowrap;-webkit-text-stroke:0.3px #FFFFFF;">ghttp_middleware_handler_response.go</div><svg style="position:absolute;left:204px;top:680px;overflow:visible" width="20" height="28" viewBox="0 0 20 28"><ellipse cx="10" cy="6" rx="9" ry="5" fill="#76B9E3"/><circle cx="2.5" cy="4" r="2.2" fill="#76B9E3"/><circle cx="17.5" cy="4" r="2.2" fill="#76B9E3"/><path d="M2 6 Q1 18 3 23 Q10 30 17 23 Q19 18 18 6 Z" fill="#76B9E3"/><circle cx="1.5" cy="15" r="1.6" fill="#D3A27F"/><circle cx="18.5" cy="15" r="1.6" fill="#D3A27F"/><circle cx="4.5" cy="26.5" r="1.6" fill="#D3A27F"/><circle cx="15.5" cy="26.5" r="1.6" fill="#D3A27F"/><circle cx="6.5" cy="8.5" r="3" fill="#fff"/><circle cx="13.5" cy="8.5" r="3" fill="#fff"/><circle cx="6.7" cy="8.7" r="1.3" fill="#000"/><circle cx="13.3" cy="8.7" r="1.3" fill="#000"/><ellipse cx="10" cy="12" rx="1.4" ry="1" fill="#000"/><rect x="9" y="13" width="2" height="2" fill="#fff"/></svg><div style="position:absolute;left:236px;top:677.23px;font-size:28.2px;line-height:34px;color:#BBBBBB;font-weight:normal;white-space:nowrap;-webkit-text-stroke:0.3px #BBBBBB;">ghttp_middleware_tracing.go</div><svg style="position:absolute;left:204px;top:720px;overflow:visible" width="20" height="28" viewBox="0 0 20 28"><ellipse cx="10" cy="6" rx="9" ry="5" fill="#76B9E3"/><circle cx="2.5" cy="4" r="2.2" fill="#76B9E3"/><circle cx="17.5" cy="4" r="2.2" fill="#76B9E3"/><path d="M2 6 Q1 18 3 23 Q10 30 17 23 Q19 18 18 6 Z" fill="#76B9E3"/><circle cx="1.5" cy="15" r="1.6" fill="#D3A27F"/><circle cx="18.5" cy="15" r="1.6" fill="#D3A27F"/><circle cx="4.5" cy="26.5" r="1.6" fill="#D3A27F"/><circle cx="15.5" cy="26.5" r="1.6" fill="#D3A27F"/><circle cx="6.5" cy="8.5" r="3" fill="#fff"/><circle cx="13.5" cy="8.5" r="3" fill="#fff"/><circle cx="6.7" cy="8.7" r="1.3" fill="#000"/><circle cx="13.3" cy="8.7" r="1.3" fill="#000"/><ellipse cx="10" cy="12" rx="1.4" ry="1" fill="#000"/><rect x="9" y="13" width="2" height="2" fill="#fff"/></svg><div style="position:absolute;left:236px;top:717.23px;font-size:28.2px;line-height:34px;color:#BBBBBB;font-weight:normal;white-space:nowrap;-webkit-text-stroke:0.3px #BBBBBB;">ghttp_request.go</div><svg style="position:absolute;left:204px;top:760px;overflow:visible" width="20" height="28" viewBox="0 0 20 28"><ellipse cx="10" cy="6" rx="9" ry="5" fill="#76B9E3"/><circle cx="2.5" cy="4" r="2.2" fill="#76B9E3"/><circle cx="17.5" cy="4" r="2.2" fill="#76B9E3"/><path d="M2 6 Q1 18 3 23 Q10 30 17 23 Q19 18 18 6 Z" fill="#76B9E3"/><circle cx="1.5" cy="15" r="1.6" fill="#D3A27F"/><circle cx="18.5" cy="15" r="1.6" fill="#D3A27F"/><circle cx="4.5" cy="26.5" r="1.6" fill="#D3A27F"/><circle cx="15.5" cy="26.5" r="1.6" fill="#D3A27F"/><circle cx="6.5" cy="8.5" r="3" fill="#fff"/><circle cx="13.5" cy="8.5" r="3" fill="#fff"/><circle cx="6.7" cy="8.7" r="1.3" fill="#000"/><circle cx="13.3" cy="8.7" r="1.3" fill="#000"/><ellipse cx="10" cy="12" rx="1.4" ry="1" fill="#000"/><rect x="9" y="13" width="2" height="2" fill="#fff"/></svg><div style="position:absolute;left:236px;top:757.23px;font-size:28.2px;line-height:34px;color:#BBBBBB;font-weight:normal;white-space:nowrap;-webkit-text-stroke:0.3px #BBBBBB;">ghttp_request_auth.go</div><svg style="position:absolute;left:204px;top:800px;overflow:visible" width="20" height="28" viewBox="0 0 20 28"><ellipse cx="10" cy="6" rx="9" ry="5" fill="#76B9E3"/><circle cx="2.5" cy="4" r="2.2" fill="#76B9E3"/><circle cx="17.5" cy="4" r="2.2" fill="#76B9E3"/><path d="M2 6 Q1 18 3 23 Q10 30 17 23 Q19 18 18 6 Z" fill="#76B9E3"/><circle cx="1.5" cy="15" r="1.6" fill="#D3A27F"/><circle cx="18.5" cy="15" r="1.6" fill="#D3A27F"/><circle cx="4.5" cy="26.5" r="1.6" fill="#D3A27F"/><circle cx="15.5" cy="26.5" r="1.6" fill="#D3A27F"/><circle cx="6.5" cy="8.5" r="3" fill="#fff"/><circle cx="13.5" cy="8.5" r="3" fill="#fff"/><circle cx="6.7" cy="8.7" r="1.3" fill="#000"/><circle cx="13.3" cy="8.7" r="1.3" fill="#000"/><ellipse cx="10" cy="12" rx="1.4" ry="1" fill="#000"/><rect x="9" y="13" width="2" height="2" fill="#fff"/></svg><div style="position:absolute;left:236px;top:797.23px;font-size:28.2px;line-height:34px;color:#BBBBBB;font-weight:normal;white-space:nowrap;-webkit-text-stroke:0.3px #BBBBBB;">ghttp_request_middleware.go</div><svg style="position:absolute;left:204px;top:840px;overflow:visible" width="20" height="28" viewBox="0 0 20 28"><ellipse cx="10" cy="6" rx="9" ry="5" fill="#76B9E3"/><circle cx="2.5" cy="4" r="2.2" fill="#76B9E3"/><circle cx="17.5" cy="4" r="2.2" fill="#76B9E3"/><path d="M2 6 Q1 18 3 23 Q10 30 17 23 Q19 18 18 6 Z" fill="#76B9E3"/><circle cx="1.5" cy="15" r="1.6" fill="#D3A27F"/><circle cx="18.5" cy="15" r="1.6" fill="#D3A27F"/><circle cx="4.5" cy="26.5" r="1.6" fill="#D3A27F"/><circle cx="15.5" cy="26.5" r="1.6" fill="#D3A27F"/><circle cx="6.5" cy="8.5" r="3" fill="#fff"/><circle cx="13.5" cy="8.5" r="3" fill="#fff"/><circle cx="6.7" cy="8.7" r="1.3" fill="#000"/><circle cx="13.3" cy="8.7" r="1.3" fill="#000"/><ellipse cx="10" cy="12" rx="1.4" ry="1" fill="#000"/><rect x="9" y="13" width="2" height="2" fill="#fff"/></svg><div style="position:absolute;left:236px;top:837.23px;font-size:28.2px;line-height:34px;color:#BBBBBB;font-weight:normal;white-space:nowrap;-webkit-text-stroke:0.3px #BBBBBB;">ghttp_request_param.go</div><svg style="position:absolute;left:204px;top:880px;overflow:visible" width="20" height="28" viewBox="0 0 20 28"><ellipse cx="10" cy="6" rx="9" ry="5" fill="#76B9E3"/><circle cx="2.5" cy="4" r="2.2" fill="#76B9E3"/><circle cx="17.5" cy="4" r="2.2" fill="#76B9E3"/><path d="M2 6 Q1 18 3 23 Q10 30 17 23 Q19 18 18 6 Z" fill="#76B9E3"/><circle cx="1.5" cy="15" r="1.6" fill="#D3A27F"/><circle cx="18.5" cy="15" r="1.6" fill="#D3A27F"/><circle cx="4.5" cy="26.5" r="1.6" fill="#D3A27F"/><circle cx="15.5" cy="26.5" r="1.6" fill="#D3A27F"/><circle cx="6.5" cy="8.5" r="3" fill="#fff"/><circle cx="13.5" cy="8.5" r="3" fill="#fff"/><circle cx="6.7" cy="8.7" r="1.3" fill="#000"/><circle cx="13.3" cy="8.7" r="1.3" fill="#000"/><ellipse cx="10" cy="12" rx="1.4" ry="1" fill="#000"/><rect x="9" y="13" width="2" height="2" fill="#fff"/></svg><div style="position:absolute;left:236px;top:877.23px;font-size:28.2px;line-height:34px;color:#BBBBBB;font-weight:normal;white-space:nowrap;-webkit-text-stroke:0.3px #BBBBBB;">ghttp_request_param_ctx.go</div><svg style="position:absolute;left:204px;top:920px;overflow:visible" width="20" height="28" viewBox="0 0 20 28"><ellipse cx="10" cy="6" rx="9" ry="5" fill="#76B9E3"/><circle cx="2.5" cy="4" r="2.2" fill="#76B9E3"/><circle cx="17.5" cy="4" r="2.2" fill="#76B9E3"/><path d="M2 6 Q1 18 3 23 Q10 30 17 23 Q19 18 18 6 Z" fill="#76B9E3"/><circle cx="1.5" cy="15" r="1.6" fill="#D3A27F"/><circle cx="18.5" cy="15" r="1.6" fill="#D3A27F"/><circle cx="4.5" cy="26.5" r="1.6" fill="#D3A27F"/><circle cx="15.5" cy="26.5" r="1.6" fill="#D3A27F"/><circle cx="6.5" cy="8.5" r="3" fill="#fff"/><circle cx="13.5" cy="8.5" r="3" fill="#fff"/><circle cx="6.7" cy="8.7" r="1.3" fill="#000"/><circle cx="13.3" cy="8.7" r="1.3" fill="#000"/><ellipse cx="10" cy="12" rx="1.4" ry="1" fill="#000"/><rect x="9" y="13" width="2" height="2" fill="#fff"/></svg><div style="position:absolute;left:236px;top:917.23px;font-size:28.2px;line-height:34px;color:#BBBBBB;font-weight:normal;white-space:nowrap;-webkit-text-stroke:0.3px #BBBBBB;">ghttp_request_param_file.go</div><svg style="position:absolute;left:204px;top:960px;overflow:visible" width="20" height="28" viewBox="0 0 20 28"><ellipse cx="10" cy="6" rx="9" ry="5" fill="#76B9E3"/><circle cx="2.5" cy="4" r="2.2" fill="#76B9E3"/><circle cx="17.5" cy="4" r="2.2" fill="#76B9E3"/><path d="M2 6 Q1 18 3 23 Q10 30 17 23 Q19 18 18 6 Z" fill="#76B9E3"/><circle cx="1.5" cy="15" r="1.6" fill="#D3A27F"/><circle cx="18.5" cy="15" r="1.6" fill="#D3A27F"/><circle cx="4.5" cy="26.5" r="1.6" fill="#D3A27F"/><circle cx="15.5" cy="26.5" r="1.6" fill="#D3A27F"/><circle cx="6.5" cy="8.5" r="3" fill="#fff"/><circle cx="13.5" cy="8.5" r="3" fill="#fff"/><circle cx="6.7" cy="8.7" r="1.3" fill="#000"/><circle cx="13.3" cy="8.7" r="1.3" fill="#000"/><ellipse cx="10" cy="12" rx="1.4" ry="1" fill="#000"/><rect x="9" y="13" width="2" height="2" fill="#fff"/></svg><div style="position:absolute;left:236px;top:957.23px;font-size:28.2px;line-height:34px;color:#BBBBBB;font-weight:normal;white-space:nowrap;-webkit-text-stroke:0.3px #BBBBBB;">ghttp_request_param_form.go</div><svg style="position:absolute;left:204px;top:1000px;overflow:visible" width="20" height="28" viewBox="0 0 20 28"><ellipse cx="10" cy="6" rx="9" ry="5" fill="#76B9E3"/><circle cx="2.5" cy="4" r="2.2" fill="#76B9E3"/><circle cx="17.5" cy="4" r="2.2" fill="#76B9E3"/><path d="M2 6 Q1 18 3 23 Q10 30 17 23 Q19 18 18 6 Z" fill="#76B9E3"/><circle cx="1.5" cy="15" r="1.6" fill="#D3A27F"/><circle cx="18.5" cy="15" r="1.6" fill="#D3A27F"/><circle cx="4.5" cy="26.5" r="1.6" fill="#D3A27F"/><circle cx="15.5" cy="26.5" r="1.6" fill="#D3A27F"/><circle cx="6.5" cy="8.5" r="3" fill="#fff"/><circle cx="13.5" cy="8.5" r="3" fill="#fff"/><circle cx="6.7" cy="8.7" r="1.3" fill="#000"/><circle cx="13.3" cy="8.7" r="1.3" fill="#000"/><ellipse cx="10" cy="12" rx="1.4" ry="1" fill="#000"/><rect x="9" y="13" width="2" height="2" fill="#fff"/></svg><div style="position:absolute;left:236px;top:997.23px;font-size:28.2px;line-height:34px;color:#BBBBBB;font-weight:normal;white-space:nowrap;-webkit-text-stroke:0.3px #BBBBBB;">ghttp_request_param_page.go</div><svg style="position:absolute;left:204px;top:1040px;overflow:visible" width="20" height="28" viewBox="0 0 20 28"><ellipse cx="10" cy="6" rx="9" ry="5" fill="#76B9E3"/><circle cx="2.5" cy="4" r="2.2" fill="#76B9E3"/><circle cx="17.5" cy="4" r="2.2" fill="#76B9E3"/><path d="M2 6 Q1 18 3 23 Q10 30 17 23 Q19 18 18 6 Z" fill="#76B9E3"/><circle cx="1.5" cy="15" r="1.6" fill="#D3A27F"/><circle cx="18.5" cy="15" r="1.6" fill="#D3A27F"/><circle cx="4.5" cy="26.5" r="1.6" fill="#D3A27F"/><circle cx="15.5" cy="26.5" r="1.6" fill="#D3A27F"/><circle cx="6.5" cy="8.5" r="3" fill="#fff"/><circle cx="13.5" cy="8.5" r="3" fill="#fff"/><circle cx="6.7" cy="8.7" r="1.3" fill="#000"/><circle cx="13.3" cy="8.7" r="1.3" fill="#000"/><ellipse cx="10" cy="12" rx="1.4" ry="1" fill="#000"/><rect x="9" y="13" width="2" height="2" fill="#fff"/></svg><div style="position:absolute;left:236px;top:1037.23px;font-size:28.2px;line-height:34px;color:#BBBBBB;font-weight:normal;white-space:nowrap;-webkit-text-stroke:0.3px #BBBBBB;">ghttp_request_param_param.go</div><svg style="position:absolute;left:204px;top:1080px;overflow:visible" width="20" height="28" viewBox="0 0 20 28"><ellipse cx="10" cy="6" rx="9" ry="5" fill="#76B9E3"/><circle cx="2.5" cy="4" r="2.2" fill="#76B9E3"/><circle cx="17.5" cy="4" r="2.2" fill="#76B9E3"/><path d="M2 6 Q1 18 3 23 Q10 30 17 23 Q19 18 18 6 Z" fill="#76B9E3"/><circle cx="1.5" cy="15" r="1.6" fill="#D3A27F"/><circle cx="18.5" cy="15" r="1.6" fill="#D3A27F"/><circle cx="4.5" cy="26.5" r="1.6" fill="#D3A27F"/><circle cx="15.5" cy="26.5" r="1.6" fill="#D3A27F"/><circle cx="6.5" cy="8.5" r="3" fill="#fff"/><circle cx="13.5" cy="8.5" r="3" fill="#fff"/><circle cx="6.7" cy="8.7" r="1.3" fill="#000"/><circle cx="13.3" cy="8.7" r="1.3" fill="#000"/><ellipse cx="10" cy="12" rx="1.4" ry="1" fill="#000"/><rect x="9" y="13" width="2" height="2" fill="#fff"/></svg><div style="position:absolute;left:236px;top:1077.23px;font-size:28.2px;line-height:34px;color:#BBBBBB;font-weight:normal;white-space:nowrap;-webkit-text-stroke:0.3px #BBBBBB;">ghttp_request_param_query.go</div><svg style="position:absolute;left:204px;top:1120px;overflow:visible" width="20" height="28" viewBox="0 0 20 28"><ellipse cx="10" cy="6" rx="9" ry="5" fill="#76B9E3"/><circle cx="2.5" cy="4" r="2.2" fill="#76B9E3"/><circle cx="17.5" cy="4" r="2.2" fill="#76B9E3"/><path d="M2 6 Q1 18 3 23 Q10 30 17 23 Q19 18 18 6 Z" fill="#76B9E3"/><circle cx="1.5" cy="15" r="1.6" fill="#D3A27F"/><circle cx="18.5" cy="15" r="1.6" fill="#D3A27F"/><circle cx="4.5" cy="26.5" r="1.6" fill="#D3A27F"/><circle cx="15.5" cy="26.5" r="1.6" fill="#D3A27F"/><circle cx="6.5" cy="8.5" r="3" fill="#fff"/><circle cx="13.5" cy="8.5" r="3" fill="#fff"/><circle cx="6.7" cy="8.7" r="1.3" fill="#000"/><circle cx="13.3" cy="8.7" r="1.3" fill="#000"/><ellipse cx="10" cy="12" rx="1.4" ry="1" fill="#000"/><rect x="9" y="13" width="2" height="2" fill="#fff"/></svg><div style="position:absolute;left:236px;top:1117.23px;font-size:28.2px;line-height:34px;color:#BBBBBB;font-weight:normal;white-space:nowrap;-webkit-text-stroke:0.3px #BBBBBB;">ghttp_request_param_request.go</div><svg style="position:absolute;left:204px;top:1160px;overflow:visible" width="20" height="28" viewBox="0 0 20 28"><ellipse cx="10" cy="6" rx="9" ry="5" fill="#76B9E3"/><circle cx="2.5" cy="4" r="2.2" fill="#76B9E3"/><circle cx="17.5" cy="4" r="2.2" fill="#76B9E3"/><path d="M2 6 Q1 18 3 23 Q10 30 17 23 Q19 18 18 6 Z" fill="#76B9E3"/><circle cx="1.5" cy="15" r="1.6" fill="#D3A27F"/><circle cx="18.5" cy="15" r="1.6" fill="#D3A27F"/><circle cx="4.5" cy="26.5" r="1.6" fill="#D3A27F"/><circle cx="15.5" cy="26.5" r="1.6" fill="#D3A27F"/><circle cx="6.5" cy="8.5" r="3" fill="#fff"/><circle cx="13.5" cy="8.5" r="3" fill="#fff"/><circle cx="6.7" cy="8.7" r="1.3" fill="#000"/><circle cx="13.3" cy="8.7" r="1.3" fill="#000"/><ellipse cx="10" cy="12" rx="1.4" ry="1" fill="#000"/><rect x="9" y="13" width="2" height="2" fill="#fff"/></svg><div style="position:absolute;left:236px;top:1157.23px;font-size:28.2px;line-height:34px;color:#BBBBBB;font-weight:normal;white-space:nowrap;-webkit-text-stroke:0.3px #BBBBBB;">ghttp_request_param_router.go</div><svg style="position:absolute;left:204px;top:1200px;overflow:visible" width="20" height="28" viewBox="0 0 20 28"><ellipse cx="10" cy="6" rx="9" ry="5" fill="#76B9E3"/><circle cx="2.5" cy="4" r="2.2" fill="#76B9E3"/><circle cx="17.5" cy="4" r="2.2" fill="#76B9E3"/><path d="M2 6 Q1 18 3 23 Q10 30 17 23 Q19 18 18 6 Z" fill="#76B9E3"/><circle cx="1.5" cy="15" r="1.6" fill="#D3A27F"/><circle cx="18.5" cy="15" r="1.6" fill="#D3A27F"/><circle cx="4.5" cy="26.5" r="1.6" fill="#D3A27F"/><circle cx="15.5" cy="26.5" r="1.6" fill="#D3A27F"/><circle cx="6.5" cy="8.5" r="3" fill="#fff"/><circle cx="13.5" cy="8.5" r="3" fill="#fff"/><circle cx="6.7" cy="8.7" r="1.3" fill="#000"/><circle cx="13.3" cy="8.7" r="1.3" fill="#000"/><ellipse cx="10" cy="12" rx="1.4" ry="1" fill="#000"/><rect x="9" y="13" width="2" height="2" fill="#fff"/></svg><div style="position:absolute;left:236px;top:1197.23px;font-size:28.2px;line-height:34px;color:#BBBBBB;font-weight:normal;white-space:nowrap;-webkit-text-stroke:0.3px #BBBBBB;">ghttp_request_view.go</div><svg style="position:absolute;left:204px;top:1240px;overflow:visible" width="20" height="28" viewBox="0 0 20 28"><ellipse cx="10" cy="6" rx="9" ry="5" fill="#76B9E3"/><circle cx="2.5" cy="4" r="2.2" fill="#76B9E3"/><circle cx="17.5" cy="4" r="2.2" fill="#76B9E3"/><path d="M2 6 Q1 18 3 23 Q10 30 17 23 Q19 18 18 6 Z" fill="#76B9E3"/><circle cx="1.5" cy="15" r="1.6" fill="#D3A27F"/><circle cx="18.5" cy="15" r="1.6" fill="#D3A27F"/><circle cx="4.5" cy="26.5" r="1.6" fill="#D3A27F"/><circle cx="15.5" cy="26.5" r="1.6" fill="#D3A27F"/><circle cx="6.5" cy="8.5" r="3" fill="#fff"/><circle cx="13.5" cy="8.5" r="3" fill="#fff"/><circle cx="6.7" cy="8.7" r="1.3" fill="#000"/><circle cx="13.3" cy="8.7" r="1.3" fill="#000"/><ellipse cx="10" cy="12" rx="1.4" ry="1" fill="#000"/><rect x="9" y="13" width="2" height="2" fill="#fff"/></svg><div style="position:absolute;left:236px;top:1237.23px;font-size:28.2px;line-height:34px;color:#BBBBBB;font-weight:normal;white-space:nowrap;-webkit-text-stroke:0.3px #BBBBBB;">ghttp_response.go</div><svg style="position:absolute;left:204px;top:1280px;overflow:visible" width="20" height="28" viewBox="0 0 20 28"><ellipse cx="10" cy="6" rx="9" ry="5" fill="#76B9E3"/><circle cx="2.5" cy="4" r="2.2" fill="#76B9E3"/><circle cx="17.5" cy="4" r="2.2" fill="#76B9E3"/><path d="M2 6 Q1 18 3 23 Q10 30 17 23 Q19 18 18 6 Z" fill="#76B9E3"/><circle cx="1.5" cy="15" r="1.6" fill="#D3A27F"/><circle cx="18.5" cy="15" r="1.6" fill="#D3A27F"/><circle cx="4.5" cy="26.5" r="1.6" fill="#D3A27F"/><circle cx="15.5" cy="26.5" r="1.6" fill="#D3A27F"/><circle cx="6.5" cy="8.5" r="3" fill="#fff"/><circle cx="13.5" cy="8.5" r="3" fill="#fff"/><circle cx="6.7" cy="8.7" r="1.3" fill="#000"/><circle cx="13.3" cy="8.7" r="1.3" fill="#000"/><ellipse cx="10" cy="12" rx="1.4" ry="1" fill="#000"/><rect x="9" y="13" width="2" height="2" fill="#fff"/></svg><div style="position:absolute;left:236px;top:1277.23px;font-size:28.2px;line-height:34px;color:#BBBBBB;font-weight:normal;white-space:nowrap;-webkit-text-stroke:0.3px #BBBBBB;">ghttp_response_cors.go</div><svg style="position:absolute;left:204px;top:1320px;overflow:visible" width="20" height="28" viewBox="0 0 20 28"><ellipse cx="10" cy="6" rx="9" ry="5" fill="#76B9E3"/><circle cx="2.5" cy="4" r="2.2" fill="#76B9E3"/><circle cx="17.5" cy="4" r="2.2" fill="#76B9E3"/><path d="M2 6 Q1 18 3 23 Q10 30 17 23 Q19 18 18 6 Z" fill="#76B9E3"/><circle cx="1.5" cy="15" r="1.6" fill="#D3A27F"/><circle cx="18.5" cy="15" r="1.6" fill="#D3A27F"/><circle cx="4.5" cy="26.5" r="1.6" fill="#D3A27F"/><circle cx="15.5" cy="26.5" r="1.6" fill="#D3A27F"/><circle cx="6.5" cy="8.5" r="3" fill="#fff"/><circle cx="13.5" cy="8.5" r="3" fill="#fff"/><circle cx="6.7" cy="8.7" r="1.3" fill="#000"/><circle cx="13.3" cy="8.7" r="1.3" fill="#000"/><ellipse cx="10" cy="12" rx="1.4" ry="1" fill="#000"/><rect x="9" y="13" width="2" height="2" fill="#fff"/></svg><div style="position:absolute;left:236px;top:1317.23px;font-size:28.2px;line-height:34px;color:#BBBBBB;font-weight:normal;white-space:nowrap;-webkit-text-stroke:0.3px #BBBBBB;">ghttp_response_view.go</div><svg style="position:absolute;left:204px;top:1360px;overflow:visible" width="20" height="28" viewBox="0 0 20 28"><ellipse cx="10" cy="6" rx="9" ry="5" fill="#76B9E3"/><circle cx="2.5" cy="4" r="2.2" fill="#76B9E3"/><circle cx="17.5" cy="4" r="2.2" fill="#76B9E3"/><path d="M2 6 Q1 18 3 23 Q10 30 17 23 Q19 18 18 6 Z" fill="#76B9E3"/><circle cx="1.5" cy="15" r="1.6" fill="#D3A27F"/><circle cx="18.5" cy="15" r="1.6" fill="#D3A27F"/><circle cx="4.5" cy="26.5" r="1.6" fill="#D3A27F"/><circle cx="15.5" cy="26.5" r="1.6" fill="#D3A27F"/><circle cx="6.5" cy="8.5" r="3" fill="#fff"/><circle cx="13.5" cy="8.5" r="3" fill="#fff"/><circle cx="6.7" cy="8.7" r="1.3" fill="#000"/><circle cx="13.3" cy="8.7" r="1.3" fill="#000"/><ellipse cx="10" cy="12" rx="1.4" ry="1" fill="#000"/><rect x="9" y="13" width="2" height="2" fill="#fff"/></svg><div style="position:absolute;left:236px;top:1357.23px;font-size:28.2px;line-height:34px;color:#BBBBBB;font-weight:normal;white-space:nowrap;-webkit-text-stroke:0.3px #BBBBBB;">ghttp_response_write.go</div><svg style="position:absolute;left:204px;top:1400px;overflow:visible" width="20" height="28" viewBox="0 0 20 28"><ellipse cx="10" cy="6" rx="9" ry="5" fill="#76B9E3"/><circle cx="2.5" cy="4" r="2.2" fill="#76B9E3"/><circle cx="17.5" cy="4" r="2.2" fill="#76B9E3"/><path d="M2 6 Q1 18 3 23 Q10 30 17 23 Q19 18 18 6 Z" fill="#76B9E3"/><circle cx="1.5" cy="15" r="1.6" fill="#D3A27F"/><circle cx="18.5" cy="15" r="1.6" fill="#D3A27F"/><circle cx="4.5" cy="26.5" r="1.6" fill="#D3A27F"/><circle cx="15.5" cy="26.5" r="1.6" fill="#D3A27F"/><circle cx="6.5" cy="8.5" r="3" fill="#fff"/><circle cx="13.5" cy="8.5" r="3" fill="#fff"/><circle cx="6.7" cy="8.7" r="1.3" fill="#000"/><circle cx="13.3" cy="8.7" r="1.3" fill="#000"/><ellipse cx="10" cy="12" rx="1.4" ry="1" fill="#000"/><rect x="9" y="13" width="2" height="2" fill="#fff"/></svg><div style="position:absolute;left:236px;top:1397.23px;font-size:28.2px;line-height:34px;color:#BBBBBB;font-weight:normal;white-space:nowrap;-webkit-text-stroke:0.3px #BBBBBB;">ghttp_response_writer.go</div><svg style="position:absolute;left:204px;top:1440px;overflow:visible" width="20" height="28" viewBox="0 0 20 28"><ellipse cx="10" cy="6" rx="9" ry="5" fill="#76B9E3"/><circle cx="2.5" cy="4" r="2.2" fill="#76B9E3"/><circle cx="17.5" cy="4" r="2.2" fill="#76B9E3"/><path d="M2 6 Q1 18 3 23 Q10 30 17 23 Q19 18 18 6 Z" fill="#76B9E3"/><circle cx="1.5" cy="15" r="1.6" fill="#D3A27F"/><circle cx="18.5" cy="15" r="1.6" fill="#D3A27F"/><circle cx="4.5" cy="26.5" r="1.6" fill="#D3A27F"/><circle cx="15.5" cy="26.5" r="1.6" fill="#D3A27F"/><circle cx="6.5" cy="8.5" r="3" fill="#fff"/><circle cx="13.5" cy="8.5" r="3" fill="#fff"/><circle cx="6.7" cy="8.7" r="1.3" fill="#000"/><circle cx="13.3" cy="8.7" r="1.3" fill="#000"/><ellipse cx="10" cy="12" rx="1.4" ry="1" fill="#000"/><rect x="9" y="13" width="2" height="2" fill="#fff"/></svg><div style="position:absolute;left:236px;top:1437.23px;font-size:28.2px;line-height:34px;color:#BBBBBB;font-weight:normal;white-space:nowrap;-webkit-text-stroke:0.3px #BBBBBB;">ghttp_server.go</div><svg style="position:absolute;left:204px;top:1480px;overflow:visible" width="20" height="28" viewBox="0 0 20 28"><ellipse cx="10" cy="6" rx="9" ry="5" fill="#76B9E3"/><circle cx="2.5" cy="4" r="2.2" fill="#76B9E3"/><circle cx="17.5" cy="4" r="2.2" fill="#76B9E3"/><path d="M2 6 Q1 18 3 23 Q10 30 17 23 Q19 18 18 6 Z" fill="#76B9E3"/><circle cx="1.5" cy="15" r="1.6" fill="#D3A27F"/><circle cx="18.5" cy="15" r="1.6" fill="#D3A27F"/><circle cx="4.5" cy="26.5" r="1.6" fill="#D3A27F"/><circle cx="15.5" cy="26.5" r="1.6" fill="#D3A27F"/><circle cx="6.5" cy="8.5" r="3" fill="#fff"/><circle cx="13.5" cy="8.5" r="3" fill="#fff"/><circle cx="6.7" cy="8.7" r="1.3" fill="#000"/><circle cx="13.3" cy="8.7" r="1.3" fill="#000"/><ellipse cx="10" cy="12" rx="1.4" ry="1" fill="#000"/><rect x="9" y="13" width="2" height="2" fill="#fff"/></svg><div style="position:absolute;left:236px;top:1477.23px;font-size:28.2px;line-height:34px;color:#BBBBBB;font-weight:normal;white-space:nowrap;-webkit-text-stroke:0.3px #BBBBBB;">ghttp_server_admin.go</div><svg style="position:absolute;left:204px;top:1520px;overflow:visible" width="20" height="28" viewBox="0 0 20 28"><ellipse cx="10" cy="6" rx="9" ry="5" fill="#76B9E3"/><circle cx="2.5" cy="4" r="2.2" fill="#76B9E3"/><circle cx="17.5" cy="4" r="2.2" fill="#76B9E3"/><path d="M2 6 Q1 18 3 23 Q10 30 17 23 Q19 18 18 6 Z" fill="#76B9E3"/><circle cx="1.5" cy="15" r="1.6" fill="#D3A27F"/><circle cx="18.5" cy="15" r="1.6" fill="#D3A27F"/><circle cx="4.5" cy="26.5" r="1.6" fill="#D3A27F"/><circle cx="15.5" cy="26.5" r="1.6" fill="#D3A27F"/><circle cx="6.5" cy="8.5" r="3" fill="#fff"/><circle cx="13.5" cy="8.5" r="3" fill="#fff"/><circle cx="6.7" cy="8.7" r="1.3" fill="#000"/><circle cx="13.3" cy="8.7" r="1.3" fill="#000"/><ellipse cx="10" cy="12" rx="1.4" ry="1" fill="#000"/><rect x="9" y="13" width="2" height="2" fill="#fff"/></svg><div style="position:absolute;left:236px;top:1517.23px;font-size:28.2px;line-height:34px;color:#BBBBBB;font-weight:normal;white-space:nowrap;-webkit-text-stroke:0.3px #BBBBBB;">ghttp_server_admin_process.go</div><svg style="position:absolute;left:204px;top:1560px;overflow:visible" width="20" height="28" viewBox="0 0 20 28"><ellipse cx="10" cy="6" rx="9" ry="5" fill="#76B9E3"/><circle cx="2.5" cy="4" r="2.2" fill="#76B9E3"/><circle cx="17.5" cy="4" r="2.2" fill="#76B9E3"/><path d="M2 6 Q1 18 3 23 Q10 30 17 23 Q19 18 18 6 Z" fill="#76B9E3"/><circle cx="1.5" cy="15" r="1.6" fill="#D3A27F"/><circle cx="18.5" cy="15" r="1.6" fill="#D3A27F"/><circle cx="4.5" cy="26.5" r="1.6" fill="#D3A27F"/><circle cx="15.5" cy="26.5" r="1.6" fill="#D3A27F"/><circle cx="6.5" cy="8.5" r="3" fill="#fff"/><circle cx="13.5" cy="8.5" r="3" fill="#fff"/><circle cx="6.7" cy="8.7" r="1.3" fill="#000"/><circle cx="13.3" cy="8.7" r="1.3" fill="#000"/><ellipse cx="10" cy="12" rx="1.4" ry="1" fill="#000"/><rect x="9" y="13" width="2" height="2" fill="#fff"/></svg><div style="position:absolute;left:236px;top:1557.23px;font-size:28.2px;line-height:34px;color:#BBBBBB;font-weight:normal;white-space:nowrap;-webkit-text-stroke:0.3px #BBBBBB;">ghttp_server_admin_unix.go</div><svg style="position:absolute;left:204px;top:1600px;overflow:visible" width="20" height="28" viewBox="0 0 20 28"><ellipse cx="10" cy="6" rx="9" ry="5" fill="#76B9E3"/><circle cx="2.5" cy="4" r="2.2" fill="#76B9E3"/><circle cx="17.5" cy="4" r="2.2" fill="#76B9E3"/><path d="M2 6 Q1 18 3 23 Q10 30 17 23 Q19 18 18 6 Z" fill="#76B9E3"/><circle cx="1.5" cy="15" r="1.6" fill="#D3A27F"/><circle cx="18.5" cy="15" r="1.6" fill="#D3A27F"/><circle cx="4.5" cy="26.5" r="1.6" fill="#D3A27F"/><circle cx="15.5" cy="26.5" r="1.6" fill="#D3A27F"/><circle cx="6.5" cy="8.5" r="3" fill="#fff"/><circle cx="13.5" cy="8.5" r="3" fill="#fff"/><circle cx="6.7" cy="8.7" r="1.3" fill="#000"/><circle cx="13.3" cy="8.7" r="1.3" fill="#000"/><ellipse cx="10" cy="12" rx="1.4" ry="1" fill="#000"/><rect x="9" y="13" width="2" height="2" fill="#fff"/></svg><div style="position:absolute;left:236px;top:1597.23px;font-size:28.2px;line-height:34px;color:#BBBBBB;font-weight:normal;white-space:nowrap;-webkit-text-stroke:0.3px #BBBBBB;">ghttp_server_admin_windows.go</div><svg style="position:absolute;left:204px;top:1640px;overflow:visible" width="20" height="28" viewBox="0 0 20 28"><ellipse cx="10" cy="6" rx="9" ry="5" fill="#76B9E3"/><circle cx="2.5" cy="4" r="2.2" fill="#76B9E3"/><circle cx="17.5" cy="4" r="2.2" fill="#76B9E3"/><path d="M2 6 Q1 18 3 23 Q10 30 17 23 Q19 18 18 6 Z" fill="#76B9E3"/><circle cx="1.5" cy="15" r="1.6" fill="#D3A27F"/><circle cx="18.5" cy="15" r="1.6" fill="#D3A27F"/><circle cx="4.5" cy="26.5" r="1.6" fill="#D3A27F"/><circle cx="15.5" cy="26.5" r="1.6" fill="#D3A27F"/><circle cx="6.5" cy="8.5" r="3" fill="#fff"/><circle cx="13.5" cy="8.5" r="3" fill="#fff"/><circle cx="6.7" cy="8.7" r="1.3" fill="#000"/><circle cx="13.3" cy="8.7" r="1.3" fill="#000"/><ellipse cx="10" cy="12" rx="1.4" ry="1" fill="#000"/><rect x="9" y="13" width="2" height="2" fill="#fff"/></svg><div style="position:absolute;left:236px;top:1637.23px;font-size:28.2px;line-height:34px;color:#BBBBBB;font-weight:normal;white-space:nowrap;-webkit-text-stroke:0.3px #BBBBBB;">ghttp_server_config.go</div><svg style="position:absolute;left:204px;top:1680px;overflow:visible" width="20" height="28" viewBox="0 0 20 28"><ellipse cx="10" cy="6" rx="9" ry="5" fill="#76B9E3"/><circle cx="2.5" cy="4" r="2.2" fill="#76B9E3"/><circle cx="17.5" cy="4" r="2.2" fill="#76B9E3"/><path d="M2 6 Q1 18 3 23 Q10 30 17 23 Q19 18 18 6 Z" fill="#76B9E3"/><circle cx="1.5" cy="15" r="1.6" fill="#D3A27F"/><circle cx="18.5" cy="15" r="1.6" fill="#D3A27F"/><circle cx="4.5" cy="26.5" r="1.6" fill="#D3A27F"/><circle cx="15.5" cy="26.5" r="1.6" fill="#D3A27F"/><circle cx="6.5" cy="8.5" r="3" fill="#fff"/><circle cx="13.5" cy="8.5" r="3" fill="#fff"/><circle cx="6.7" cy="8.7" r="1.3" fill="#000"/><circle cx="13.3" cy="8.7" r="1.3" fill="#000"/><ellipse cx="10" cy="12" rx="1.4" ry="1" fill="#000"/><rect x="9" y="13" width="2" height="2" fill="#fff"/></svg><div style="position:absolute;left:236px;top:1677.23px;font-size:28.2px;line-height:34px;color:#BBBBBB;font-weight:normal;white-space:nowrap;-webkit-text-stroke:0.3px #BBBBBB;">ghttp_server_config_cookie.go</div><svg style="position:absolute;left:204px;top:1720px;overflow:visible" width="20" height="28" viewBox="0 0 20 28"><ellipse cx="10" cy="6" rx="9" ry="5" fill="#76B9E3"/><circle cx="2.5" cy="4" r="2.2" fill="#76B9E3"/><circle cx="17.5" cy="4" r="2.2" fill="#76B9E3"/><path d="M2 6 Q1 18 3 23 Q10 30 17 23 Q19 18 18 6 Z" fill="#76B9E3"/><circle cx="1.5" cy="15" r="1.6" fill="#D3A27F"/><circle cx="18.5" cy="15" r="1.6" fill="#D3A27F"/><circle cx="4.5" cy="26.5" r="1.6" fill="#D3A27F"/><circle cx="15.5" cy="26.5" r="1.6" fill="#D3A27F"/><circle cx="6.5" cy="8.5" r="3" fill="#fff"/><circle cx="13.5" cy="8.5" r="3" fill="#fff"/><circle cx="6.7" cy="8.7" r="1.3" fill="#000"/><circle cx="13.3" cy="8.7" r="1.3" fill="#000"/><ellipse cx="10" cy="12" rx="1.4" ry="1" fill="#000"/><rect x="9" y="13" width="2" height="2" fill="#fff"/></svg><div style="position:absolute;left:236px;top:1717.23px;font-size:28.2px;line-height:34px;color:#BBBBBB;font-weight:normal;white-space:nowrap;-webkit-text-stroke:0.3px #BBBBBB;">ghttp_server_config_logging.go</div><svg style="position:absolute;left:204px;top:1760px;overflow:visible" width="20" height="28" viewBox="0 0 20 28"><ellipse cx="10" cy="6" rx="9" ry="5" fill="#76B9E3"/><circle cx="2.5" cy="4" r="2.2" fill="#76B9E3"/><circle cx="17.5" cy="4" r="2.2" fill="#76B9E3"/><path d="M2 6 Q1 18 3 23 Q10 30 17 23 Q19 18 18 6 Z" fill="#76B9E3"/><circle cx="1.5" cy="15" r="1.6" fill="#D3A27F"/><circle cx="18.5" cy="15" r="1.6" fill="#D3A27F"/><circle cx="4.5" cy="26.5" r="1.6" fill="#D3A27F"/><circle cx="15.5" cy="26.5" r="1.6" fill="#D3A27F"/><circle cx="6.5" cy="8.5" r="3" fill="#fff"/><circle cx="13.5" cy="8.5" r="3" fill="#fff"/><circle cx="6.7" cy="8.7" r="1.3" fill="#000"/><circle cx="13.3" cy="8.7" r="1.3" fill="#000"/><ellipse cx="10" cy="12" rx="1.4" ry="1" fill="#000"/><rect x="9" y="13" width="2" height="2" fill="#fff"/></svg><div style="position:absolute;left:236px;top:1757.23px;font-size:28.2px;line-height:34px;color:#BBBBBB;font-weight:normal;white-space:nowrap;-webkit-text-stroke:0.3px #BBBBBB;">ghttp_server_config_mess.go</div><svg style="position:absolute;left:204px;top:1800px;overflow:visible" width="20" height="28" viewBox="0 0 20 28"><ellipse cx="10" cy="6" rx="9" ry="5" fill="#76B9E3"/><circle cx="2.5" cy="4" r="2.2" fill="#76B9E3"/><circle cx="17.5" cy="4" r="2.2" fill="#76B9E3"/><path d="M2 6 Q1 18 3 23 Q10 30 17 23 Q19 18 18 6 Z" fill="#76B9E3"/><circle cx="1.5" cy="15" r="1.6" fill="#D3A27F"/><circle cx="18.5" cy="15" r="1.6" fill="#D3A27F"/><circle cx="4.5" cy="26.5" r="1.6" fill="#D3A27F"/><circle cx="15.5" cy="26.5" r="1.6" fill="#D3A27F"/><circle cx="6.5" cy="8.5" r="3" fill="#fff"/><circle cx="13.5" cy="8.5" r="3" fill="#fff"/><circle cx="6.7" cy="8.7" r="1.3" fill="#000"/><circle cx="13.3" cy="8.7" r="1.3" fill="#000"/><ellipse cx="10" cy="12" rx="1.4" ry="1" fill="#000"/><rect x="9" y="13" width="2" height="2" fill="#fff"/></svg><div style="position:absolute;left:236px;top:1797.23px;font-size:28.2px;line-height:34px;color:#BBBBBB;font-weight:normal;white-space:nowrap;-webkit-text-stroke:0.3px #BBBBBB;">ghttp_server_config_route.go</div><svg style="position:absolute;left:204px;top:1840px;overflow:visible" width="20" height="28" viewBox="0 0 20 28"><ellipse cx="10" cy="6" rx="9" ry="5" fill="#76B9E3"/><circle cx="2.5" cy="4" r="2.2" fill="#76B9E3"/><circle cx="17.5" cy="4" r="2.2" fill="#76B9E3"/><path d="M2 6 Q1 18 3 23 Q10 30 17 23 Q19 18 18 6 Z" fill="#76B9E3"/><circle cx="1.5" cy="15" r="1.6" fill="#D3A27F"/><circle cx="18.5" cy="15" r="1.6" fill="#D3A27F"/><circle cx="4.5" cy="26.5" r="1.6" fill="#D3A27F"/><circle cx="15.5" cy="26.5" r="1.6" fill="#D3A27F"/><circle cx="6.5" cy="8.5" r="3" fill="#fff"/><circle cx="13.5" cy="8.5" r="3" fill="#fff"/><circle cx="6.7" cy="8.7" r="1.3" fill="#000"/><circle cx="13.3" cy="8.7" r="1.3" fill="#000"/><ellipse cx="10" cy="12" rx="1.4" ry="1" fill="#000"/><rect x="9" y="13" width="2" height="2" fill="#fff"/></svg><div style="position:absolute;left:236px;top:1837.23px;font-size:28.2px;line-height:34px;color:#BBBBBB;font-weight:normal;white-space:nowrap;-webkit-text-stroke:0.3px #BBBBBB;">ghttp_server_config_session.go</div><svg style="position:absolute;left:204px;top:1880px;overflow:visible" width="20" height="28" viewBox="0 0 20 28"><ellipse cx="10" cy="6" rx="9" ry="5" fill="#76B9E3"/><circle cx="2.5" cy="4" r="2.2" fill="#76B9E3"/><circle cx="17.5" cy="4" r="2.2" fill="#76B9E3"/><path d="M2 6 Q1 18 3 23 Q10 30 17 23 Q19 18 18 6 Z" fill="#76B9E3"/><circle cx="1.5" cy="15" r="1.6" fill="#D3A27F"/><circle cx="18.5" cy="15" r="1.6" fill="#D3A27F"/><circle cx="4.5" cy="26.5" r="1.6" fill="#D3A27F"/><circle cx="15.5" cy="26.5" r="1.6" fill="#D3A27F"/><circle cx="6.5" cy="8.5" r="3" fill="#fff"/><circle cx="13.5" cy="8.5" r="3" fill="#fff"/><circle cx="6.7" cy="8.7" r="1.3" fill="#000"/><circle cx="13.3" cy="8.7" r="1.3" fill="#000"/><ellipse cx="10" cy="12" rx="1.4" ry="1" fill="#000"/><rect x="9" y="13" width="2" height="2" fill="#fff"/></svg><div style="position:absolute;left:236px;top:1877.23px;font-size:28.2px;line-height:34px;color:#BBBBBB;font-weight:normal;white-space:nowrap;-webkit-text-stroke:0.3px #BBBBBB;">ghttp_server_config_static.go</div><svg style="position:absolute;left:204px;top:1920px;overflow:visible" width="20" height="28" viewBox="0 0 20 28"><ellipse cx="10" cy="6" rx="9" ry="5" fill="#76B9E3"/><circle cx="2.5" cy="4" r="2.2" fill="#76B9E3"/><circle cx="17.5" cy="4" r="2.2" fill="#76B9E3"/><path d="M2 6 Q1 18 3 23 Q10 30 17 23 Q19 18 18 6 Z" fill="#76B9E3"/><circle cx="1.5" cy="15" r="1.6" fill="#D3A27F"/><circle cx="18.5" cy="15" r="1.6" fill="#D3A27F"/><circle cx="4.5" cy="26.5" r="1.6" fill="#D3A27F"/><circle cx="15.5" cy="26.5" r="1.6" fill="#D3A27F"/><circle cx="6.5" cy="8.5" r="3" fill="#fff"/><circle cx="13.5" cy="8.5" r="3" fill="#fff"/><circle cx="6.7" cy="8.7" r="1.3" fill="#000"/><circle cx="13.3" cy="8.7" r="1.3" fill="#000"/><ellipse cx="10" cy="12" rx="1.4" ry="1" fill="#000"/><rect x="9" y="13" width="2" height="2" fill="#fff"/></svg><div style="position:absolute;left:236px;top:1917.23px;font-size:28.2px;line-height:34px;color:#BBBBBB;font-weight:normal;white-space:nowrap;-webkit-text-stroke:0.3px #BBBBBB;">ghttp_server_cookie.go</div><svg style="position:absolute;left:204px;top:1960px;overflow:visible" width="20" height="28" viewBox="0 0 20 28"><ellipse cx="10" cy="6" rx="9" ry="5" fill="#76B9E3"/><circle cx="2.5" cy="4" r="2.2" fill="#76B9E3"/><circle cx="17.5" cy="4" r="2.2" fill="#76B9E3"/><path d="M2 6 Q1 18 3 23 Q10 30 17 23 Q19 18 18 6 Z" fill="#76B9E3"/><circle cx="1.5" cy="15" r="1.6" fill="#D3A27F"/><circle cx="18.5" cy="15" r="1.6" fill="#D3A27F"/><circle cx="4.5" cy="26.5" r="1.6" fill="#D3A27F"/><circle cx="15.5" cy="26.5" r="1.6" fill="#D3A27F"/><circle cx="6.5" cy="8.5" r="3" fill="#fff"/><circle cx="13.5" cy="8.5" r="3" fill="#fff"/><circle cx="6.7" cy="8.7" r="1.3" fill="#000"/><circle cx="13.3" cy="8.7" r="1.3" fill="#000"/><ellipse cx="10" cy="12" rx="1.4" ry="1" fill="#000"/><rect x="9" y="13" width="2" height="2" fill="#fff"/></svg><div style="position:absolute;left:236px;top:1957.23px;font-size:28.2px;line-height:34px;color:#BBBBBB;font-weight:normal;white-space:nowrap;-webkit-text-stroke:0.3px #BBBBBB;">ghttp_server_domain.go</div></div><div style="position:absolute;left:16px;top:16px;width:24px;height:24px;border-radius:50%;background:#EC6A5E"></div><div style="position:absolute;left:56px;top:16px;width:24px;height:24px;border-radius:50%;background:#F4BF4F"></div><div style="position:absolute;left:96px;top:16px;width:24px;height:24px;border-radius:50%;background:#61C554"></div><div style="position:absolute;left:0;width:3584px;text-align:center;top:10.14px;font-size:28px;letter-spacing:-0.3px;line-height:32px;font-weight:bold;color:#A9A9A9;white-space:nowrap">gf – ghttp_middleware_handler_response.go</div><svg style="position:absolute;left:68px;top:128px;overflow:visible" width="28" height="26" viewBox="0 0 28 26"><rect x="0" y="0" width="28" height="26" fill="#8A969D"/><rect x="2.5" y="6" width="23" height="18" fill="#394655"/><rect x="4" y="7.5" width="20" height="15" fill="#3D8BB5"/></svg><div style="position:absolute;left:106px;top:123.19px;font-size:28.3px;line-height:34px;color:#BBBBBB;font-weight:normal;white-space:nowrap;-webkit-text-stroke:0.3px #BBBBBB;">Project</div><svg style="position:absolute;left:219px;top:138px;overflow:visible" width="18" height="10" viewBox="0 0 18 10"><path d="M0 0 H18 L9 10 Z" fill="#AFB1B3"/></svg><svg style="position:absolute;left:609px;top:125px;overflow:visible" width="30" height="30" viewBox="0 0 30 30"><circle cx="14.5" cy="14.5" r="12.6" fill="none" stroke="#AFB1B3" stroke-width="3"/><path d="M14.5 2.5 V11 M14.5 18 V26.5 M2.5 14.5 H11 M18 14.5 H26.5" stroke="#AFB1B3" stroke-width="3.8"/></svg><svg style="position:absolute;left:664px;top:126px;overflow:visible" width="24" height="28" viewBox="0 0 24 28"><rect x="0" y="0" width="24" height="3.5" fill="#AFB1B3"/><rect x="0" y="24.5" width="24" height="3.5" fill="#AFB1B3"/><path d="M5 11.5 L12 6 L19 11.5 Z M5 16.5 L12 22 L19 16.5 Z" fill="#AFB1B3"/></svg><svg style="position:absolute;left:716px;top:128px;overflow:visible" width="24" height="24" viewBox="0 0 24 24"><path d="M5 0 H19 L12 7 Z M5 24 H19 L12 17 Z" fill="#AFB1B3"/><rect x="0" y="10" width="24" height="4" fill="#AFB1B3"/></svg><div style="position:absolute;left:760px;top:120px;width:2px;height:40px;background:#4E4E4E;"></div><svg style="position:absolute;left:782px;top:127px;overflow:visible" width="25" height="26" viewBox="0 0 25 26"><g transform="translate(12.5 13)"><path d="M-2.5 -13 H2.5 L3 -9.5 L6.5 -7.5 L10 -9 L12.5 -4.5 L9.5 -2 V2 L12.5 4.5 L10 9 L6.5 7.5 L3 9.5 L2.5 13 H-2.5 L-3 9.5 L-6.5 7.5 L-10 9 L-12.5 4.5 L-9.5 2 V-2 L-12.5 -4.5 L-10 -9 L-6.5 -7.5 L-3 -9.5 Z" fill="#AFB1B3"/><circle r="4" fill="#394655"/></g></svg><div style="position:absolute;left:834px;top:138px;width:24px;height:4px;background:#AFB1B3;"></div><div style="position:absolute;left:874px;top:114px;width:512px;height:48px;background:#4E5254;"></div><div style="position:absolute;left:874px;top:162px;width:512px;height:6px;background:#747A80;"></div><svg style="position:absolute;left:895px;top:125px;overflow:visible" width="21" height="29" viewBox="0 0 20 28"><ellipse cx="10" cy="6" rx="9" ry="5" fill="#76B9E3"/><circle cx="2.5" cy="4" r="2.2" fill="#76B9E3"/><circle cx="17.5" cy="4" r="2.2" fill="#76B9E3"/><path d="M2 6 Q1 18 3 23 Q10 30 17 23 Q19 18 18 6 Z" fill="#76B9E3"/><circle cx="1.5" cy="15" r="1.6" fill="#D3A27F"/><circle cx="18.5" cy="15" r="1.6" fill="#D3A27F"/><circle cx="4.5" cy="26.5" r="1.6" fill="#D3A27F"/><circle cx="15.5" cy="26.5" r="1.6" fill="#D3A27F"/><circle cx="6.5" cy="8.5" r="3" fill="#fff"/><circle cx="13.5" cy="8.5" r="3" fill="#fff"/><circle cx="6.7" cy="8.7" r="1.3" fill="#000"/><circle cx="13.3" cy="8.7" r="1.3" fill="#000"/><ellipse cx="10" cy="12" rx="1.4" ry="1" fill="#000"/><rect x="9" y="13" width="2" height="2" fill="#fff"/></svg><div style="position:absolute;left:931px;top:125.63px;font-size:23px;line-height:28px;color:#BBBBBB;font-weight:normal;white-space:nowrap;-webkit-text-stroke:0.3px #BBBBBB;">ghttp_middleware_handler_response.go</div><svg style="position:absolute;left:1354px;top:133px;overflow:visible" width="16" height="15" viewBox="0 0 16 15"><path d="M1 1 L15 14 M15 1 L1 14" stroke="#6E7072" stroke-width="2"/></svg><svg style="position:absolute;left:18px;top:74px;overflow:visible" width="28" height="21" viewBox="0 0 28 21"><path d="M0 0 H9.4 L11.4 3.6 H24 V8 H5 L0 15.2 Z" fill="#AFB1B3"/><path d="M5 9.8 H28 L22.4 20 H0 Z" fill="#AFB1B3"/></svg><svg style="position:absolute;left:70px;top:72px;overflow:visible" width="24" height="24" viewBox="0 0 24 24"><path d="M0 0 H24 V24 H0 Z M4.2 4.2 V11.9 H19.8 V4.2 Z M6.1 18 V24 H18 V18 Z" fill="#AFB1B3" fill-rule="evenodd"/><rect x="8" y="20.1" width="8.1" height="3.9" fill="#AFB1B3"/></svg><svg style="position:absolute;left:122px;top:72px;overflow:visible" width="24" height="24" viewBox="0 0 24 24"><path d="M21.3 10.7 A9.4 9.4 0 0 0 4.8 6" fill="none" stroke="#AFB1B3" stroke-width="5.2"/><path d="M0 0.7 V10.7 H10 Z" fill="#AFB1B3"/><path d="M2.7 13.2 A9.4 9.4 0 0 0 19.2 18" fill="none" stroke="#AFB1B3" stroke-width="5.2"/><path d="M24 13.2 V23.2 L14.2 13.2 Z" fill="#AFB1B3"/></svg><div style="position:absolute;left:166px;top:64px;width:2px;height:40px;background:#4D4F51;"></div><div style="position:absolute;left:284px;top:64px;width:2px;height:40px;background:#4D4F51;"></div><div style="position:absolute;left:370px;top:64px;width:2px;height:40px;background:#4D4F51;"></div><div style="position:absolute;left:1160px;top:64px;width:2px;height:40px;background:#4D4F51;"></div><div style="position:absolute;left:1544px;top:64px;width:2px;height:40px;background:#4D4F51;"></div><svg style="position:absolute;left:186px;top:74px;overflow:visible" width="26" height="20" viewBox="0 0 26 20"><path d="M10 1.5 L2 10 L10 18.5 M2.5 10 H26" fill="none" stroke="#AFB1B3" stroke-width="3.2"/></svg><svg style="position:absolute;left:240px;top:74px;overflow:visible" width="26" height="20" viewBox="0 0 26 20"><path d="M16 1.5 L24 10 L16 18.5 M23.5 10 H0" fill="none" stroke="#59595A" stroke-width="3.2"/></svg><svg style="position:absolute;left:303px;top:71px;overflow:visible" width="30" height="25" viewBox="0 0 30 25"><ellipse cx="21.5" cy="7" rx="4.6" ry="6.3" fill="#AFB1B3"/><path d="M16 15.5 C23 15.5 29 17.5 29 21 V22 H20 Z" fill="#AFB1B3"/><path d="M0.7 24 C1.5 19.5 6 18 9.8 17 C8.3 15.5 7.5 13 7.5 9.5 C7.5 4 10 1 13 1 C16 1 18.5 4 18.5 9.5 C18.5 13 17.7 15.5 16.2 17 C20 18 24.5 19.5 25.2 24 Z" fill="#AFB1B3" stroke="#3C3F41" stroke-width="2" paint-order="stroke"/></svg><svg style="position:absolute;left:338px;top:82px;overflow:visible" width="16" height="8" viewBox="0 0 16 8"><path d="M0 0 H16 L8 8 Z" fill="#AFB1B3"/></svg><div style="position:absolute;left:390px;top:62px;width:468px;height:40px;border:2px solid #5E6060;border-radius:7px"></div><svg style="position:absolute;left:414px;top:70px;overflow:visible" width="28" height="30" viewBox="0 0 28 30"><ellipse cx="10" cy="6" rx="9" ry="5.5" fill="#4D6578"/><circle cx="1.8" cy="4" r="1.8" fill="#4D6578"/><circle cx="18.2" cy="4" r="1.8" fill="#4D6578"/><path d="M1.5 6 Q0.5 18 2.5 23 Q10 30 17.5 23 Q19.5 18 18.5 6 Z" fill="#4D6578"/><circle cx="6.4" cy="8" r="2.6" fill="#8796A1"/><circle cx="13.3" cy="8" r="2.6" fill="#8796A1"/><circle cx="6.4" cy="8" r="1.2" fill="#1e1e1e"/><circle cx="13.3" cy="8" r="1.2" fill="#1e1e1e"/><path d="M16 14.2 L26 21.4 L16 27.3 Z" fill="#4E8A52" opacity="0.9"/><circle cx="22.2" cy="26.1" r="4.8" fill="#1a1a1a"/><circle cx="22.2" cy="26.1" r="3.8" fill="#22E022"/></svg><div style="position:absolute;left:448.5px;top:69.63px;font-size:23.3px;line-height:28px;color:#BBBBBB;font-weight:normal;white-space:nowrap;-webkit-text-stroke:0.3px #BBBBBB;">go build github.com/gogf/gf/v2/.test</div><svg style="position:absolute;left:825px;top:80px;overflow:visible" width="18" height="10" viewBox="0 0 18 10"><path d="M0 0 H18 L9 10 Z" fill="#AFB1B3"/></svg><svg style="position:absolute;left:886px;top:70px;overflow:visible" width="27" height="28" viewBox="0 0 27 28"><path d="M17 9 H10 A8.5 8.5 0 1 0 11 26" fill="none" stroke="#499C54" stroke-width="3.6"/><path d="M16 1 L27 9 L16 17 Z" fill="#499C54"/><rect x="13.5" y="18" width="10" height="10" fill="#AFB1B3"/></svg><svg style="position:absolute;left:938px;top:70px;overflow:visible" width="24" height="28" viewBox="0 0 24 28"><path d="M5.5 0.8 L10.5 6 M18.5 0.8 L13.5 6" stroke="#499C54" stroke-width="3.2"/><path d="M12 5.5 C17 5.5 20.5 8.5 20.5 12 V21 C20.5 25 17 28 12 28 C7 28 3.5 25 3.5 21 V12 C3.5 8.5 7 5.5 12 5.5 Z" fill="#499C54"/><path d="M0 10.1 H24 M0 16.2 H24 M0 22.4 H24" stroke="#499C54" stroke-width="3.4"/><path d="M8.2 13.8 H15.8 M8.2 19.6 H15.8" stroke="#3C3F41" stroke-width="2.6"/></svg><svg style="position:absolute;left:982px;top:66px;overflow:visible" width="36" height="36" viewBox="0 0 36 36"><path d="M5.9 8 L15.7 5.9 L25.9 8 V13.7 H22 V11.4 L16.2 10.2 V25.7 L19.8 23.2 V27.7 L15.7 29.8 C10 27 5.9 24.5 5.9 20.7 Z" fill="#59595A"/><path d="M22.1 16.1 L35.3 24.8 L22.1 33.8 Z" fill="#59595A"/></svg><svg style="position:absolute;left:1030px;top:66px;overflow:visible" width="36" height="36" viewBox="0 0 36 36"><path d="M29.3 15.6 A10.6 10.6 0 1 0 19.5 27.4" fill="none" stroke="#59595A" stroke-width="3"/><path d="M18.4 11.4 V16.5 L14.8 21" fill="none" stroke="#59595A" stroke-width="2.6"/><path d="M22.2 16.4 L35.2 24.8 L22.2 33.8 Z" fill="#59595A"/></svg><svg style="position:absolute;left:1080px;top:82px;overflow:visible" width="16" height="8" viewBox="0 0 16 8"><path d="M0 0 H16 L8 8 Z" fill="#AFB1B3"/></svg><div style="position:absolute;left:1118px;top:74px;width:20px;height:20px;background:#C75450;"></div><div style="position:absolute;left:1181px;top:71.00px;font-size:22.5px;line-height:27px;color:#BBBBBB;font-weight:normal;white-space:nowrap;-webkit-text-stroke:0.3px #BBBBBB;">Git:</div><svg style="position:absolute;left:1242px;top:72px;overflow:visible" width="22" height="22" viewBox="0 0 22 22"><path d="M20.5 1.5 L4 18" stroke="#3592C4" stroke-width="3.6"/><path d="M0 7.5 V22 H14.5 Z" fill="#3592C4"/></svg><svg style="position:absolute;left:1292px;top:72px;overflow:visible" width="27" height="22" viewBox="0 0 27 22"><path d="M1.5 10.5 L9 18 L25.5 1.5" fill="none" stroke="#499C54" stroke-width="4"/></svg><svg style="position:absolute;left:1344px;top:74px;overflow:visible" width="22" height="22" viewBox="0 0 22 22"><path d="M1.5 20.5 L18 4" stroke="#499C54" stroke-width="3.6"/><path d="M7.5 0 H22 V14.5 Z" fill="#499C54"/></svg><svg style="position:absolute;left:1394px;top:70px;overflow:visible" width="28" height="28" viewBox="0 0 28 28"><path d="M28 9.5 H15" stroke="#3592C4" stroke-width="3"/><path d="M18.5 0 V17 L10.5 8.5 Z" fill="#3592C4"/><path d="M0 19.5 H13" stroke="#3592C4" stroke-width="3"/><path d="M9.5 11 V28 L17.5 19.5 Z" fill="#3592C4"/></svg><svg style="position:absolute;left:1446px;top:70px;overflow:visible" width="28" height="28" viewBox="0 0 28 28"><circle cx="14" cy="14" r="12" fill="none" stroke="#AFB1B3" stroke-width="3"/><path d="M13 7 V15 L18 20" fill="none" stroke="#AFB1B3" stroke-width="3"/></svg><svg style="position:absolute;left:1500px;top:70px;overflow:visible" width="27" height="27" viewBox="0 0 27 27"><path d="M7 8.5 H16.9 A7.45 7.45 0 0 1 16.9 23.4 H9.5" fill="none" stroke="#59595A" stroke-width="3.2"/><path d="M0 8.5 L8.5 0 V17 Z" fill="#59595A"/></svg><svg style="position:absolute;left:1564px;top:68px;overflow:visible" width="28" height="32" viewBox="0 0 28 32"><path d="M14 0 L28 8 V24 L14 32 L0 24 V8 Z" fill="#59595A"/></svg><svg style="position:absolute;left:1616px;top:70px;overflow:visible" width="28" height="28" viewBox="0 0 28 28"><path d="M13 1 H28 V20 H22 V5 H13 Z" fill="#59595A"/><path d="M16 8 H25 M18 12 H25 M19 16 H25" stroke="#3C3F41" stroke-width="1.5"/><circle cx="9.5" cy="15.5" r="7" fill="none" stroke="#59595A" stroke-width="3"/><path d="M14.5 20.5 L20.5 27" stroke="#59595A" stroke-width="3.2"/></svg><svg style="position:absolute;left:1666px;top:73px;overflow:visible" width="32" height="22" viewBox="0 0 32 22"><path d="M7 22 C2 22 0 19 0 15.5 C0 12 3 9.5 6.5 10 C7 4 11 0 17 0 C23 0 26.5 4.5 27 9.5 C30 10 32 12.5 32 16 C32 19.5 29.5 22 26 22 Z" fill="#59595A"/></svg><svg style="position:absolute;left:3492px;top:70px;overflow:visible" width="29" height="28" viewBox="0 0 29 28"><circle cx="11.5" cy="11.5" r="9.3" fill="none" stroke="#AFB1B3" stroke-width="4"/><path d="M17.5 17.5 L27 26.5" stroke="#AFB1B3" stroke-width="4"/></svg><svg style="position:absolute;left:3542px;top:68px;overflow:visible" width="32" height="32" viewBox="0 0 32 32"><circle cx="16" cy="16" r="16" fill="#3592C4"/><path d="M16 24 V10" stroke="#fff" stroke-width="3.2"/><path d="M8 16 L16 7.5 L24 16 Z" fill="#fff"/></svg><div style="position:absolute;left:20.23px;top:165.00px;font-size:23px;line-height:28px;color:#DDDDDD;white-space:nowrap;-webkit-text-stroke:0.3px #DDDDDD;transform:translate(-50%,-50%) rotate(-90deg)">Project</div><svg style="position:absolute;left:10px;top:214px;overflow:visible" width="22" height="18" viewBox="0 0 22 18"><path d="M0 0 H7 L9 3 H22 V18 H0 Z" fill="#AFB1B3"/></svg><div style="position:absolute;left:20.40px;top:316.00px;font-size:22.5px;line-height:27px;color:#BBBBBB;white-space:nowrap;-webkit-text-stroke:0.3px #BBBBBB;transform:translate(-50%,-50%) rotate(-90deg)">Commit</div><svg style="position:absolute;left:8px;top:367px;overflow:visible" width="26" height="17" viewBox="0 0 26 17"><circle cx="13" cy="8.5" r="5.5" fill="none" stroke="#AFB1B3" stroke-width="3"/><path d="M0 8.5 H7 M19 8.5 H26" stroke="#AFB1B3" stroke-width="3"/></svg><div style="position:absolute;left:20.40px;top:500.00px;font-size:22.5px;line-height:27px;color:#BBBBBB;white-space:nowrap;-webkit-text-stroke:0.3px #BBBBBB;transform:translate(-50%,-50%) rotate(-90deg)">Pull Requests</div><svg style="position:absolute;left:11px;top:579px;overflow:visible" width="22" height="23" viewBox="0 0 22 23"><path d="M1.5 0 V23" stroke="#AFB1B3" stroke-width="3"/><path d="M11 8 H21 V23" fill="none" stroke="#AFB1B3" stroke-width="3"/><path d="M3 8.5 L11 2 V15 Z" fill="#AFB1B3"/></svg><div style="position:absolute;left:20.23px;top:1550.00px;font-size:23px;line-height:28px;color:#BBBBBB;white-space:nowrap;-webkit-text-stroke:0.3px #BBBBBB;transform:translate(-50%,-50%) rotate(-90deg)">Structure</div><svg style="position:absolute;left:12px;top:1610px;overflow:visible" width="18" height="18" viewBox="0 0 18 18"><rect x="0" y="10" width="7" height="8" fill="#AFB1B3"/><rect x="10" y="0" width="8" height="7" fill="#AFB1B3"/><rect x="10" y="10" width="8" height="8" fill="#AFB1B3"/></svg><div style="position:absolute;left:20.40px;top:1719.00px;font-size:22.5px;line-height:27px;color:#BBBBBB;white-space:nowrap;-webkit-text-stroke:0.3px #BBBBBB;transform:translate(-50%,-50%) rotate(-90deg)">Favorites</div><svg style="position:absolute;left:8px;top:1774px;overflow:visible" width="26" height="26" viewBox="0 0 26 26"><path d="M13 0 L16.5 9 H26 L18.5 15 L21.5 25 L13 19 L4.5 25 L7.5 15 L0 9 H9.5 Z" fill="#AFB1B3"/></svg><div style="position:absolute;left:20.40px;top:1884.00px;font-size:22.5px;line-height:27px;color:#BBBBBB;white-space:nowrap;-webkit-text-stroke:0.3px #BBBBBB;transform:translate(-50%,-50%) rotate(-90deg)">OpenAPI</div><svg style="position:absolute;left:8px;top:1938px;overflow:visible" width="26" height="26" viewBox="0 0 26 26"><rect x="1.1" y="1.1" width="23.8" height="23.8" rx="2" fill="none" stroke="#000" stroke-width="2.2"/><rect x="0" y="0" width="26" height="6" rx="2" fill="#000"/><text x="4.5" y="20" font-family="Liberation Sans" font-size="11" font-weight="bold" textLength="17" lengthAdjust="spacingAndGlyphs" fill="#000">/API</text></svg><svg style="position:absolute;left:3552px;top:134px;overflow:visible" width="22" height="25" viewBox="0 0 22 25"><path d="M0 3.8 V21 A11 3.4 0 0 0 22 21 V3.8 Z" fill="#AFB1B3"/><ellipse cx="11" cy="3.8" rx="11" ry="3.3" fill="#AFB1B3"/><g fill="none" stroke="#3C3F41" stroke-width="1.8"><path d="M0 4.6 A11 3.3 0 0 0 22 4.6"/><path d="M0 10.4 A11 3.3 0 0 0 22 10.4"/><path d="M0 15.8 A11 3.3 0 0 0 22 15.8"/></g></svg><div style="position:absolute;left:3562.97px;top:215.50px;font-size:23px;line-height:28px;color:#BBBBBB;white-space:nowrap;-webkit-text-stroke:0.3px #BBBBBB;transform:translate(-50%,-50%) rotate(90deg)">Database</div><svg style="position:absolute;left:3554px;top:1618px;overflow:visible" width="19" height="16" viewBox="0 0 19 16"><path d="M0 16 V0 H4.5 L9.15 7 L13.8 0 H18.3 V16 H14 V6.5 L9.15 12.2 L4.3 6.5 V16 Z" fill="#AFB1B3"/></svg><div style="position:absolute;left:3562.80px;top:1674.50px;font-size:22.5px;line-height:27px;color:#BBBBBB;white-space:nowrap;-webkit-text-stroke:0.3px #BBBBBB;transform:translate(-50%,-50%) rotate(90deg)">make</div><svg style="position:absolute;left:3550px;top:1746px;overflow:visible" width="26" height="26" viewBox="0 0 26 26"><rect x="1.1" y="1.1" width="23.8" height="23.8" rx="2" fill="none" stroke="#000" stroke-width="2.2"/><rect x="0" y="0" width="26" height="6" rx="2" fill="#000"/><text x="4.5" y="20" font-family="Liberation Sans" font-size="11" font-weight="bold" textLength="17" lengthAdjust="spacingAndGlyphs" fill="#000">/API</text></svg><div style="position:absolute;left:3562.80px;top:1871.00px;font-size:22.5px;line-height:27px;color:#BBBBBB;white-space:nowrap;-webkit-text-stroke:0.3px #BBBBBB;transform:translate(-50%,-50%) rotate(90deg)">API Security Audit</div><svg style="position:absolute;left:3505px;top:184px;overflow:visible" width="23" height="18" viewBox="0 0 23 18"><path d="M1.5 9 L8 15.5 L21.5 2" fill="none" stroke="#499C54" stroke-width="3.8"/></svg><div style="position:absolute;left:3520px;top:502px;width:16px;height:938px;border-radius:8px;background:#4A4A4A"></div><div style="position:absolute;left:849px;top:421px;width:17px;height:473px;border-radius:8.5px;background:#575859;box-shadow:0 0 0 1px #333"></div><svg style="position:absolute;left:62px;top:1997px;overflow:visible" width="17" height="24" viewBox="0 0 17 24"><circle cx="3" cy="3" r="3" fill="#AFB1B3"/><circle cx="3" cy="21" r="3" fill="#AFB1B3"/><circle cx="14" cy="7" r="3" fill="#AFB1B3"/><path d="M3 3 V21 M14 7 C14 13 9 13.5 3.5 17" fill="none" stroke="#AFB1B3" stroke-width="3"/></svg><div style="position:absolute;left:92px;top:1994.87px;font-size:22.6px;line-height:27px;color:#BBBBBB;font-weight:normal;white-space:nowrap;-webkit-text-stroke:0.3px #BBBBBB;">Git</div><svg style="position:absolute;left:161px;top:1997px;overflow:visible" width="24" height="24" viewBox="0 0 24 24"><circle cx="9.5" cy="9.5" r="7.3" fill="none" stroke="#AFB1B3" stroke-width="3.2"/><path d="M14.5 14.5 L22.5 22.5" stroke="#AFB1B3" stroke-width="3.6"/></svg><div style="position:absolute;left:195px;top:1994.87px;font-size:22.6px;line-height:27px;color:#BBBBBB;font-weight:normal;white-space:nowrap;-webkit-text-stroke:0.3px #BBBBBB;">Find</div><svg style="position:absolute;left:278px;top:1998px;overflow:visible" width="22" height="24" viewBox="0 0 22 24"><path d="M0 0 L16 10 L0 20 Z" fill="#AFB1B3"/><circle cx="18.5" cy="19.5" r="4.2" fill="#1d1d1d"/><circle cx="18.5" cy="19.5" r="3.3" fill="#23D323"/></svg><div style="position:absolute;left:309.5px;top:1994.87px;font-size:22.6px;line-height:27px;color:#BBBBBB;font-weight:normal;white-space:nowrap;-webkit-text-stroke:0.3px #BBBBBB;">Run</div><svg style="position:absolute;left:388px;top:2000px;overflow:visible" width="21" height="16" viewBox="0 0 21 16"><path d="M0 1.5 H3.5 M6.5 1.5 H21 M0 8 H3.5 M6.5 8 H21 M0 14.5 H3.5 M6.5 14.5 H21" stroke="#AFB1B3" stroke-width="3"/></svg><div style="position:absolute;left:419px;top:1994.87px;font-size:22.6px;line-height:27px;color:#BBBBBB;font-weight:normal;white-space:nowrap;-webkit-text-stroke:0.3px #BBBBBB;">TODO</div><svg style="position:absolute;left:523px;top:1997px;overflow:visible" width="21" height="21" viewBox="0 0 21 21"><circle cx="10.5" cy="10.5" r="10.5" fill="#AFB1B3"/><rect x="8.7" y="4" width="3.6" height="7.5" fill="#3C3F41"/><rect x="8.7" y="13.5" width="3.6" height="3.6" fill="#3C3F41"/></svg><div style="position:absolute;left:555px;top:1994.87px;font-size:22.6px;line-height:27px;color:#BBBBBB;font-weight:normal;white-space:nowrap;-webkit-text-stroke:0.3px #BBBBBB;">Problems</div><svg style="position:absolute;left:694px;top:1997px;overflow:visible" width="22" height="24" viewBox="0 0 22 24"><path d="M6 0.5 L8.5 4 M16 0.5 L13.5 4" stroke="#AFB1B3" stroke-width="2"/><path d="M11 3 C15 3 17 5.5 17 8 V17 C17 21 14.5 24 11 24 C7.5 24 5 21 5 17 V8 C5 5.5 7 3 11 3 Z" fill="#AFB1B3"/><path d="M0 9 H22 M0 14 H22 M0 19 H22" stroke="#AFB1B3" stroke-width="2"/></svg><div style="position:absolute;left:727px;top:1994.87px;font-size:22.6px;line-height:27px;color:#BBBBBB;font-weight:normal;white-space:nowrap;-webkit-text-stroke:0.3px #BBBBBB;">Debug</div><svg style="position:absolute;left:836px;top:1998px;overflow:visible" width="22" height="20" viewBox="0 0 22 20"><rect x="0" y="0" width="22" height="20" fill="#AFB1B3"/><path d="M3.5 4 L8 8 L3.5 12" fill="none" stroke="#3C3F41" stroke-width="1.8"/><rect x="10" y="14" width="8" height="2" fill="#3C3F41"/></svg><div style="position:absolute;left:869px;top:1994.87px;font-size:22.6px;line-height:27px;color:#BBBBBB;font-weight:normal;white-space:nowrap;-webkit-text-stroke:0.3px #BBBBBB;">Terminal</div><svg style="position:absolute;left:3152px;top:1996px;overflow:visible" width="26" height="26" viewBox="0 0 26 26"><path d="M13 0 A13 13 0 1 0 13 26 H26 V13 A13 13 0 0 0 13 0 Z" fill="#499C54"/><path d="M9.9 10.2 L14 7.2 H16.9 V20 H13.6 V11.2 L9.9 13 Z" fill="#fff"/></svg><div style="position:absolute;left:3187px;top:1994.87px;font-size:22.6px;line-height:27px;color:#BBBBBB;font-weight:normal;white-space:nowrap;-webkit-text-stroke:0.3px #BBBBBB;">Event Log</div><svg style="position:absolute;left:3330px;top:1996px;overflow:visible" width="26" height="26" viewBox="0 0 26 26"><rect x="1.1" y="1.1" width="23.8" height="23.8" rx="2" fill="none" stroke="#000" stroke-width="2.2"/><rect x="0" y="0" width="26" height="6" rx="2" fill="#000"/><text x="4.5" y="20" font-family="Liberation Sans" font-size="11" font-weight="bold" textLength="17" lengthAdjust="spacingAndGlyphs" fill="#000">/API</text></svg><div style="position:absolute;left:3365px;top:1994.87px;font-size:22.6px;line-height:27px;color:#BBBBBB;font-weight:normal;white-space:nowrap;-webkit-text-stroke:0.3px #BBBBBB;">Audit Problems</div><svg style="position:absolute;left:12px;top:2038px;overflow:visible" width="24" height="24" viewBox="0 0 24 24"><rect x="5" y="1" width="18" height="18" fill="none" stroke="#AFB1B3" stroke-width="2.4"/><path d="M1 5 V23 H20" fill="none" stroke="#AFB1B3" stroke-width="2.4"/></svg><div style="position:absolute;left:63px;top:2035.76px;font-size:23.2px;line-height:28px;color:#BBBBBB;font-weight:normal;white-space:nowrap;-webkit-text-stroke:0.3px #BBBBBB;">Compilation failed (today 3:26</div><svg style="position:absolute;left:374px;top:2040px;overflow:visible" width="44" height="22" viewBox="0 0 44 22"><g stroke="#BBBBBB" stroke-width="2" fill="none"><path d="M1 2 H20 M10 2 V21 M11 9 L17 13"/><path d="M27 1 L24 7 M25 5 H41 M23 12 H43 M33 5 V21"/></g></svg><div style="position:absolute;left:417px;top:2035.76px;font-size:23.2px;line-height:28px;color:#BBBBBB;font-weight:normal;white-space:nowrap;-webkit-text-stroke:0.3px #BBBBBB;">)</div><div style="position:absolute;left:3060px;top:2036.50px;font-size:22.5px;line-height:27px;color:#BBBBBB;font-weight:normal;white-space:nowrap;-webkit-text-stroke:0.3px #BBBBBB;">2:3</div><div style="position:absolute;left:3117px;top:2036.50px;font-size:22.5px;line-height:27px;color:#BBBBBB;font-weight:normal;white-space:nowrap;-webkit-text-stroke:0.3px #BBBBBB;">LF</div><div style="position:absolute;left:3165px;top:2036.50px;font-size:22.5px;line-height:27px;color:#BBBBBB;font-weight:normal;white-space:nowrap;-webkit-text-stroke:0.3px #BBBBBB;">UTF-8</div><div style="position:absolute;left:3255px;top:2036.50px;font-size:22.5px;line-height:27px;color:#BBBBBB;font-weight:normal;white-space:nowrap;-webkit-text-stroke:0.3px #BBBBBB;">Tab</div><svg style="position:absolute;left:3318px;top:2036px;overflow:visible" width="27" height="29" viewBox="0 0 27 29"><circle cx="4" cy="4" r="3" fill="#AFB1B3"/><circle cx="4" cy="25" r="3" fill="#AFB1B3"/><circle cx="18" cy="4" r="3" fill="#AFB1B3"/><path d="M4 4 V25 M18 4 C18 13 5 12 4 22" fill="none" stroke="#AFB1B3" stroke-width="3"/><circle cx="20" cy="22" r="6.5" fill="#499C54"/></svg><div style="position:absolute;left:3349px;top:2036.50px;font-size:22.5px;line-height:27px;color:#BBBBBB;font-weight:normal;white-space:nowrap;-webkit-text-stroke:0.3px #BBBBBB;">master</div><svg style="position:absolute;left:3438px;top:2038px;overflow:visible" width="24" height="24" viewBox="0 0 24 24"><path d="M1.6 10.5 V6 A4.4 4.4 0 0 1 10.4 6 V10.5" fill="none" stroke="#AFB1B3" stroke-width="3.2"/><rect x="6" y="10" width="16" height="12" fill="#AFB1B3"/></svg><svg style="position:absolute;left:3484px;top:2035px;overflow:visible" width="32" height="31" viewBox="0 0 32 31"><path d="M7 20.5 C3 20.5 0 17.5 0 13.5 C0 9.5 3 6.5 6.5 6.5 C8 2.5 12 0 16.5 0 C21.5 0 25 3 26 7.5 C28.5 8.5 30 11 30 14 C30 17.5 28 20.5 24 20.5 Z" fill="#AFB1B3"/><path d="M10.6 7 C10.6 4.2 12.6 2.8 15 2.8 C17.6 2.8 19.5 4.6 19.5 7 C19.5 10.2 15.6 10.8 15.6 14.2" fill="none" stroke="#3C3F41" stroke-width="2.3"/><circle cx="15.6" cy="17.2" r="1.4" fill="#3C3F41"/><circle cx="25" cy="24" r="9.3" fill="#3C3F41"/><g transform="translate(25 24)"><rect x="-1.9" y="-7.6" width="3.8" height="4" fill="#AFB1B3" transform="rotate(0)"/><rect x="-1.9" y="-7.6" width="3.8" height="4" fill="#AFB1B3" transform="rotate(60)"/><rect x="-1.9" y="-7.6" width="3.8" height="4" fill="#AFB1B3" transform="rotate(120)"/><rect x="-1.9" y="-7.6" width="3.8" height="4" fill="#AFB1B3" transform="rotate(180)"/><rect x="-1.9" y="-7.6" width="3.8" height="4" fill="#AFB1B3" transform="rotate(240)"/><rect x="-1.9" y="-7.6" width="3.8" height="4" fill="#AFB1B3" transform="rotate(300)"/><circle r="5.6" fill="#AFB1B3"/><circle r="2.3" fill="#3C3F41"/></g></svg><svg style="position:absolute;left:3536px;top:2038px;overflow:visible" width="24" height="24" viewBox="0 0 24 24"><circle cx="12" cy="12" r="12" fill="#C75450"/><rect x="10" y="4" width="4" height="8" fill="#3C3F41"/><rect x="10" y="14.5" width="4" height="4" fill="#3C3F41"/></svg><div style="position:absolute;left:0px;top:0px;width:3584px;height:2px;background:#8A8B8C;"></div><div style="position:absolute;left:0px;top:2px;width:3584px;height:1px;background:#36383A;"></div><div style="position:absolute;left:0px;top:0px;width:2px;height:2070px;background:#6B6D6F;"></div><div style="position:absolute;left:3582px;top:0px;width:2px;height:2070px;background:#6B6D6F;"></div><div style="position:absolute;left:0px;top:2068px;width:3584px;height:2px;background:#6B6D6F;"></div><div style="position:absolute;left:0px;top:0px;width:22px;height:22px;background:radial-gradient(circle at 22px 22px, transparent 19.5px, #6B6D6F 20px, #6B6D6F 21px, #000 21.5px, #000 22.5px, #C9C9C7 23px)"></div><div style="position:absolute;left:3562px;top:0px;width:22px;height:22px;background:radial-gradient(circle at 0px 22px, transparent 19.5px, #6B6D6F 20px, #6B6D6F 21px, #000 21.5px, #000 22.5px, #D5D5D5 23px)"></div><div style="position:absolute;left:0px;top:2048px;width:22px;height:22px;background:radial-gradient(circle at 22px 0px, transparent 19.5px, #6B6D6F 20px, #6B6D6F 21px, #000 21.5px, #000 22.5px, #0E1116 23px)"></div><div style="position:absolute;left:3562px;top:2048px;width:22px;height:22px;background:radial-gradient(circle at 0px 0px, transparent 19.5px, #6B6D6F 20px, #6B6D6F 21px, #000 21.5px, #000 22.5px, #1B2016 23px)"></div>
</div></body></html>
